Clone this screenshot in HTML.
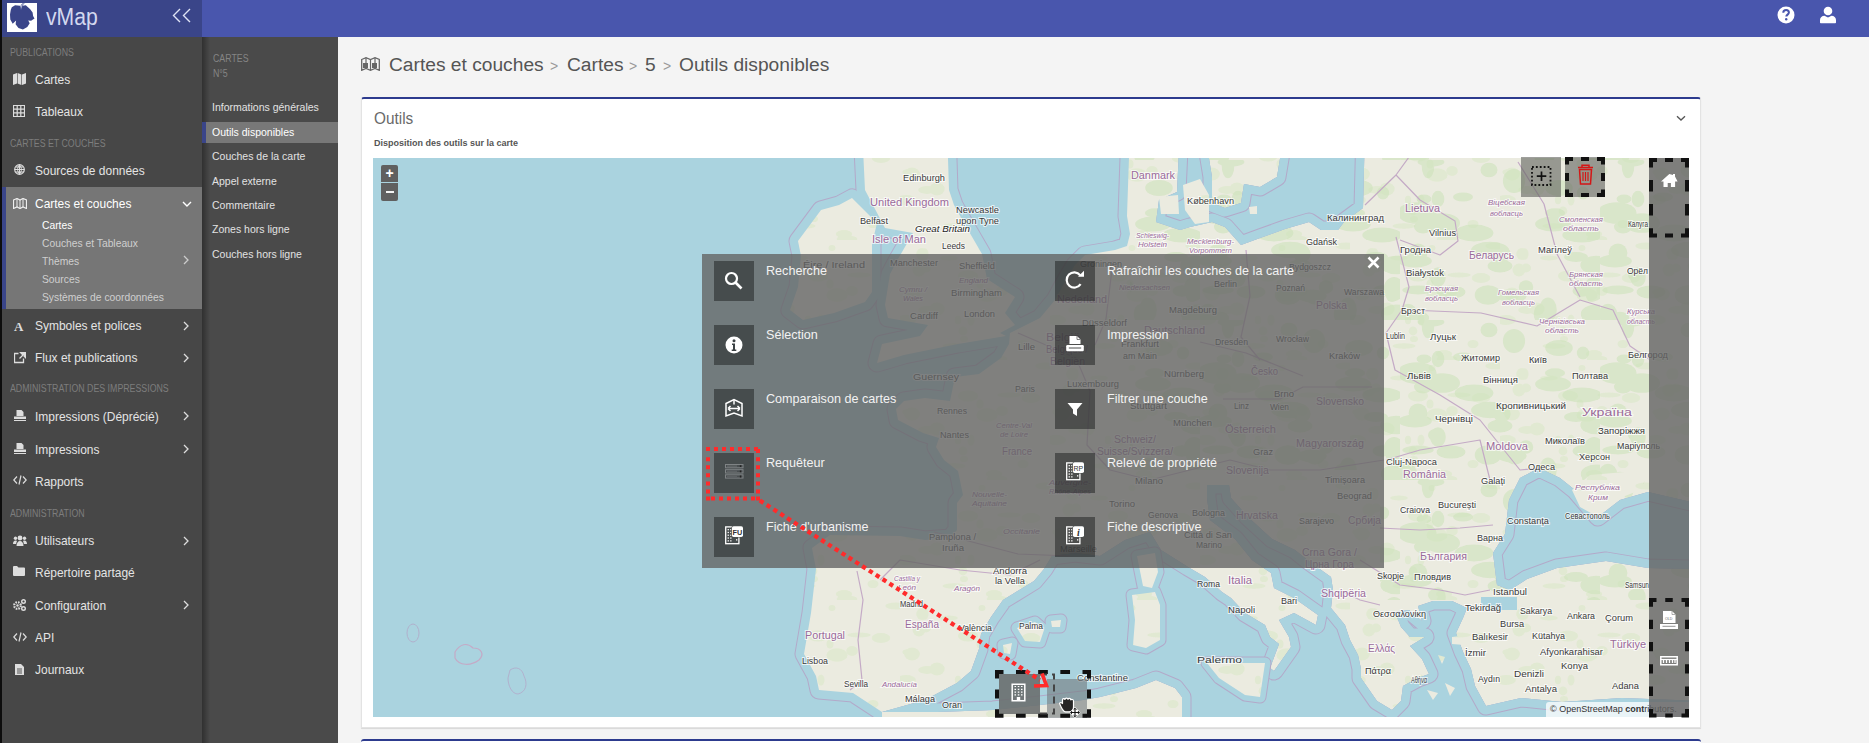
<!DOCTYPE html>
<html><head><meta charset="utf-8">
<style>
*{margin:0;padding:0;box-sizing:border-box}
html,body{width:1869px;height:743px;overflow:hidden;background:#f4f4f4;font-family:"Liberation Sans",sans-serif}
.a{position:absolute;white-space:nowrap}
#topL{left:0;top:0;width:202px;height:37px;background:#3a4589}
#topR{left:202px;top:0;width:1667px;height:37px;background:#4956ad}
#blk{left:0;top:0;width:2px;height:743px;background:#0d0d0d}
#side{left:2px;top:37px;width:200px;height:706px;background:#474747}
#side2{left:202px;top:37px;width:136px;height:706px;background:#4a4a4a}
#sh{left:202px;top:37px;width:8px;height:706px;background:linear-gradient(90deg,rgba(0,0,0,.35),rgba(0,0,0,0))}
.hd{font-size:10px;color:#7d7d7d;left:10px;line-height:12px;transform:scaleX(.88);transform-origin:left}
.mi{font-size:13px;color:#e4e4e4;left:35px;line-height:16px;transform:scaleX(.92);transform-origin:left}
.si{font-size:10.3px;color:#cfcfcf;left:42px;line-height:14px}
.s2{font-size:10.5px;color:#e2e2e2;left:212px;line-height:14px}
.ot{font-size:12.6px;color:#f2f2f2;line-height:16px}
.ib{width:40px;height:40px;background:rgba(30,32,33,.52)}
</style></head><body>
<div class="a" id="topL"></div>
<div class="a" id="topR"></div>
<div class="a" id="side"></div>
<div class="a" id="side2"></div>
<div class="a" id="sh"></div>
<div class="a" style="left:2px;top:187px;width:200px;height:122px;background:#767676"></div>
<div class="a" style="left:2px;top:187px;width:4px;height:122px;background:#3a4589"></div>
<div class="a" style="left:202px;top:122px;width:136px;height:21px;background:#787878"></div>
<div class="a" style="left:202px;top:122px;width:4px;height:21px;background:#3a4589"></div>
<div class="a" id="blk"></div>
<!-- logo -->
<div class="a" style="left:7px;top:3px;width:30px;height:29px;background:#fff"></div>
<svg class="a" style="left:0;top:0" width="40" height="36" viewBox="0 0 40 36"><path d="M11.8 7.3L15.1 5.3 20 5.8 21 9.7 22.4 5.8 25.8 5.3 30.2 9.2 32.6 12.6 33.1 16 34.5 18.4 31.1 20.8 28.2 20.4 29.7 23.3 27.3 27.1 22.9 29.6 18.5 28.1 15.6 24.2 16.1 20.4 12.7 23.8 10.3 19.4 10 14.5 10.8 9.7z" fill="#3a4589"/><path d="M20.3 9.5C20.5 6 21.5 4 23.6 2.9M21.6 9.5C21.8 6.5 22.5 4.5 24.5 2.9" fill="none" stroke="#3a4589" stroke-width=".7"/></svg>
<div class="a" style="left:46px;top:3px;font-size:23px;line-height:28px;color:#d3d8ef;transform:scaleX(.92);transform-origin:left">vMap</div>
<svg class="a" style="left:172px;top:8px" width="20" height="15" viewBox="0 0 20 15"><path d="M8 1L1.5 7.5 8 14M18 1l-6.5 6.5L18 14" fill="none" stroke="#dfe3f5" stroke-width="1.4"/></svg>
<!-- top right icons -->
<svg class="a" style="left:1776.5px;top:5.8px" width="18" height="18" viewBox="0 0 18 18"><circle cx="9" cy="9" r="8.5" fill="#fff"/><path d="M6.3 6.8c0-1.7 1.2-2.7 2.8-2.7s2.8 1 2.8 2.5c0 2-2.6 2.1-2.6 4" fill="none" stroke="#4956ad" stroke-width="2"/><circle cx="9.2" cy="13.3" r="1.2" fill="#4956ad"/></svg>
<svg class="a" style="left:1819px;top:6px" width="18" height="18" viewBox="0 0 18 18"><circle cx="9" cy="5" r="4.3" fill="#fff"/><path d="M1 16.5v-2.5c0-2.5 2-4.2 4.5-4.2l3.5 1.8 3.5-1.8c2.5 0 4.5 1.7 4.5 4.2v2.5a.8.8 0 0 1-.8.8H1.8a.8.8 0 0 1-.8-.8z" fill="#fff"/></svg>
<div class="a hd" style="top:46.6px">PUBLICATIONS</div>
<div class="a hd" style="top:137.6px">CARTES ET COUCHES</div>
<div class="a hd" style="top:383.3px">ADMINISTRATION DES IMPRESSIONS</div>
<div class="a hd" style="top:507.9px">ADMINISTRATION</div>
<div class="a mi" style="top:71.9px">Cartes</div>
<svg class="a ic" style="left:13px;top:73.4px" width="13" height="12" viewBox="0 0 13 12"><path d="M0 1.5L4 0v10.5L0 12zM4.6 0l3.8 1.5V12L4.6 10.5zM9 1.5L13 0v10.5L9 12z" fill="#ddd"/></svg>
<div class="a mi" style="top:103.8px">Tableaux</div>
<svg class="a ic" style="left:13px;top:105.3px" width="12" height="12" viewBox="0 0 12 12"><path d="M.5 .5h11v11h-11zM.5 4.2h11M.5 7.8h11M4.2 .5v11M7.8 .5v11" fill="none" stroke="#ddd" stroke-width="1.2"/></svg>
<div class="a mi" style="top:162.9px">Sources de données</div>
<svg class="a ic" style="left:14px;top:164.4px" width="11" height="11" viewBox="0 0 11 11"><circle cx="5.5" cy="5.5" r="4.8" fill="none" stroke="#ddd" stroke-width="1.2"/><path d="M.7 5.5h9.6M5.5 .7v9.6M2 3h7M2 8h7M5.5 .7c-2.5 3-2.5 6.6 0 9.6M5.5 .7c2.5 3 2.5 6.6 0 9.6" fill="none" stroke="#ddd" stroke-width="1"/></svg>
<div class="a mi" style="top:196.1px;color:#fff">Cartes et couches</div>
<svg class="a ic" style="left:13px;top:197.6px" width="14" height="11" viewBox="0 0 14 11"><path d="M.5 2L4 .5 7 2l3-1.5L13.5 2v8.5L10 9 7 10.5 4 9 .5 10.5z" fill="none" stroke="#eee" stroke-width="1.2"/><path d="M4 .5V9M7 2v8.5M10 .5V9" stroke="#eee" stroke-width="1"/></svg>
<svg class="a" style="left:182px;top:200.6px" width="10" height="6" viewBox="0 0 10 6"><path d="M1 1l4 4 4-4" fill="none" stroke="#fff" stroke-width="1.4"/></svg>
<div class="a mi" style="top:318.2px">Symboles et polices</div>
<div class="a" style="left:14px;top:319.7px;font:bold 13px 'Liberation Serif',serif;color:#ddd;line-height:13px">A</div>
<svg class="a" style="left:183px;top:320.7px" width="6" height="10" viewBox="0 0 6 10"><path d="M1 1l4 4-4 4" fill="none" stroke="#ddd" stroke-width="1.3"/></svg>
<div class="a mi" style="top:350.1px">Flux et publications</div>
<svg class="a ic" style="left:14px;top:351.6px" width="12" height="12" viewBox="0 0 12 12"><path d="M9.5 6.5v4h-9v-9h4" fill="none" stroke="#ddd" stroke-width="1.3"/><path d="M6.5 0.5h5v5z M10 2L5.5 6.5" fill="#ddd" stroke="#ddd" stroke-width="1.3"/></svg>
<svg class="a" style="left:183px;top:352.6px" width="6" height="10" viewBox="0 0 6 10"><path d="M1 1l4 4-4 4" fill="none" stroke="#ddd" stroke-width="1.3"/></svg>
<div class="a mi" style="top:408.9px">Impressions (Déprécié)</div>
<svg class="a ic" style="left:14px;top:410.4px" width="12" height="11" viewBox="0 0 12 11"><path d="M2.5 0h5l2 2v4h-7z" fill="#ddd"/><path d="M0 6.5h12V9H0zM0 10h12v1H0z" fill="#ddd"/></svg>
<svg class="a" style="left:183px;top:411.4px" width="6" height="10" viewBox="0 0 6 10"><path d="M1 1l4 4-4 4" fill="none" stroke="#ddd" stroke-width="1.3"/></svg>
<div class="a mi" style="top:441.5px">Impressions</div>
<svg class="a ic" style="left:14px;top:443.0px" width="12" height="11" viewBox="0 0 12 11"><path d="M2.5 0h5l2 2v4h-7z" fill="#ddd"/><path d="M0 6.5h12V9H0zM0 10h12v1H0z" fill="#ddd"/></svg>
<svg class="a" style="left:183px;top:444.0px" width="6" height="10" viewBox="0 0 6 10"><path d="M1 1l4 4-4 4" fill="none" stroke="#ddd" stroke-width="1.3"/></svg>
<div class="a mi" style="top:473.8px">Rapports</div>
<svg class="a ic" style="left:13px;top:475.3px" width="14" height="10" viewBox="0 0 14 10"><path d="M4 1.5L.8 5 4 8.5M10 1.5L13.2 5 10 8.5M8 0.5L6 9.5" fill="none" stroke="#ddd" stroke-width="1.2"/></svg>
<div class="a mi" style="top:533.0px">Utilisateurs</div>
<svg class="a ic" style="left:13px;top:534.5px" width="14" height="11" viewBox="0 0 14 11"><circle cx="7" cy="3" r="2.4" fill="#ddd"/><circle cx="2.5" cy="3.3" r="1.7" fill="#ddd"/><circle cx="11.5" cy="3.3" r="1.7" fill="#ddd"/><path d="M3.5 11c0-3 1.5-5 3.5-5s3.5 2 3.5 5zM0 9c0-2 1-3.5 2.5-3.5 1 0 1.5.5 1.5.5-.5 1-.8 2-.8 3zM14 9c0-2-1-3.5-2.5-3.5-1 0-1.5.5-1.5.5.5 1 .8 2 .8 3z" fill="#ddd"/></svg>
<svg class="a" style="left:183px;top:535.5px" width="6" height="10" viewBox="0 0 6 10"><path d="M1 1l4 4-4 4" fill="none" stroke="#ddd" stroke-width="1.3"/></svg>
<div class="a mi" style="top:564.9px">Répertoire partagé</div>
<svg class="a ic" style="left:13px;top:566.4px" width="12" height="10" viewBox="0 0 12 10"><path d="M0 1a1 1 0 0 1 1-1h3l1.5 1.5H11a1 1 0 0 1 1 1V9a1 1 0 0 1-1 1H1a1 1 0 0 1-1-1z" fill="#ddd"/></svg>
<div class="a mi" style="top:597.9px">Configuration</div>
<svg class="a ic" style="left:13px;top:599.4px" width="13" height="12" viewBox="0 0 13 12"><circle cx="4.5" cy="6.5" r="3.3" fill="none" stroke="#ddd" stroke-width="2.2" stroke-dasharray="1.6 1"/><circle cx="4.5" cy="6.5" r="1.2" fill="#ddd"/><circle cx="10.5" cy="2.5" r="1.8" fill="none" stroke="#ddd" stroke-width="1.4"/><circle cx="10.5" cy="9.5" r="1.8" fill="none" stroke="#ddd" stroke-width="1.4"/></svg>
<svg class="a" style="left:183px;top:600.4px" width="6" height="10" viewBox="0 0 6 10"><path d="M1 1l4 4-4 4" fill="none" stroke="#ddd" stroke-width="1.3"/></svg>
<div class="a mi" style="top:630.2px">API</div>
<svg class="a ic" style="left:13px;top:631.7px" width="14" height="10" viewBox="0 0 14 10"><path d="M4 1.5L.8 5 4 8.5M10 1.5L13.2 5 10 8.5M8 0.5L6 9.5" fill="none" stroke="#ddd" stroke-width="1.2"/></svg>
<div class="a mi" style="top:662.0px">Journaux</div>
<svg class="a ic" style="left:15px;top:663.5px" width="9" height="11" viewBox="0 0 9 11"><path d="M0 0h6l3 3v8H0z" fill="#ddd"/><path d="M2 5h5M2 7h5M2 9h5" stroke="#474747" stroke-width=".9"/></svg>
<div class="a si" style="top:218.5px;color:#fff">Cartes</div>
<div class="a si" style="top:236.5px;">Couches et Tableaux</div>
<div class="a si" style="top:254.5px;">Thèmes</div>
<div class="a si" style="top:272.5px;">Sources</div>
<div class="a si" style="top:290.5px;">Systèmes de coordonnées</div>
<svg class="a" style="left:183px;top:254.5px" width="6" height="10" viewBox="0 0 6 10"><path d="M1 1l4 4-4 4" fill="none" stroke="#ccc" stroke-width="1.3"/></svg><div class="a hd" style="left:213px;top:53px;color:#858585">CARTES</div>
<div class="a hd" style="left:213px;top:68px;color:#858585">N°5</div>
<div class="a s2" style="top:100px">Informations générales</div>
<div class="a s2" style="top:125px;color:#fff">Outils disponibles</div>
<div class="a s2" style="top:149px">Couches de la carte</div>
<div class="a s2" style="top:174px">Appel externe</div>
<div class="a s2" style="top:198px">Commentaire</div>
<div class="a s2" style="top:222px">Zones hors ligne</div>
<div class="a s2" style="top:247px">Couches hors ligne</div>
<!-- breadcrumb -->
<svg class="a" style="left:361px;top:57px" width="19" height="14" viewBox="0 0 19 14"><path d="M.7 2.5L5 .7l4.5 1.8L14 .7l4.3 1.8v10.8L14 11.5l-4.5 1.8L5 11.5.7 13.3z" fill="none" stroke="#666" stroke-width="1.3"/><path d="M5 .7v10.8M9.5 2.5v10.8M14 .7v10.8" stroke="#666" stroke-width="1.2"/><rect x="2" y="6" width="5" height="5" fill="#666"/><rect x="11" y="6" width="5" height="5" fill="#666"/></svg>
<div class="a" style="left:389px;top:54px;font-size:19.2px;line-height:22px;color:#555">Cartes et couches</div>
<div class="a" style="left:550px;top:56px;font-size:14px;line-height:20px;color:#9a9a9a">&gt;</div>
<div class="a" style="left:567px;top:54px;font-size:19.2px;line-height:22px;color:#555">Cartes</div>
<div class="a" style="left:629px;top:56px;font-size:14px;line-height:20px;color:#9a9a9a">&gt;</div>
<div class="a" style="left:645px;top:54px;font-size:19.2px;line-height:22px;color:#555">5</div>
<div class="a" style="left:663px;top:56px;font-size:14px;line-height:20px;color:#9a9a9a">&gt;</div>
<div class="a" style="left:679px;top:54px;font-size:19.2px;line-height:22px;color:#555">Outils disponibles</div>
<!-- panel -->
<div class="a" style="left:361px;top:97px;width:1340px;height:631px;background:#fff;border:1px solid #e3e3e3;border-top:2px solid #2d3b8e;border-radius:3px 3px 0 0;box-shadow:0 1px 1px rgba(0,0,0,.12)"></div>
<div class="a" style="left:374px;top:107.5px;font-size:16.5px;line-height:20px;color:#6a6a6a;transform:scaleX(.93);transform-origin:left">Outils</div>
<svg class="a" style="left:1675.5px;top:114.5px" width="10" height="7" viewBox="0 0 10 7"><path d="M1 1.2l4 3.8 4-3.8" fill="none" stroke="#555" stroke-width="1.3"/></svg>
<div class="a" style="left:374px;top:137px;font-size:9px;font-weight:bold;line-height:12px;color:#555">Disposition des outils sur la carte</div>
<div class="a" style="left:361px;top:739px;width:1340px;height:10px;background:#fff;border-top:2px solid #2d3b8e;border-radius:3px 3px 0 0"></div>
<svg class="a" style="left:373px;top:158px" width="1316" height="559" viewBox="373 158 1316 559">
<defs><pattern id="lp" width="150" height="120" patternUnits="userSpaceOnUse"><rect width="150" height="120" fill="#ebebe0"/><g fill="#d9e8c6" opacity=".55"><ellipse cx="49" cy="18" rx="8.9" ry="2.4"/><ellipse cx="80" cy="44" rx="3.5" ry="4.5"/><ellipse cx="6" cy="52" rx="3.6" ry="2.5"/><ellipse cx="64" cy="99" rx="4.1" ry="3.1"/><ellipse cx="94" cy="114" rx="8.2" ry="4.0"/><ellipse cx="146" cy="6" rx="10.7" ry="3.4"/><ellipse cx="22" cy="14" rx="5.8" ry="6.1"/><ellipse cx="27" cy="70" rx="8.8" ry="3.9"/><ellipse cx="82" cy="8" rx="3.5" ry="3.0"/><ellipse cx="102" cy="51" rx="5.8" ry="4.9"/><ellipse cx="68" cy="36" rx="10.1" ry="5.5"/><ellipse cx="37" cy="69" rx="7.7" ry="6.4"/><ellipse cx="109" cy="35" rx="11.8" ry="2.6"/><ellipse cx="63" cy="91" rx="4.4" ry="4.4"/><ellipse cx="6" cy="80" rx="9.9" ry="4.9"/><ellipse cx="131" cy="38" rx="9.3" ry="5.0"/><ellipse cx="87" cy="55" rx="10.6" ry="6.7"/><ellipse cx="71" cy="80" rx="3.5" ry="5.5"/><ellipse cx="97" cy="119" rx="10.4" ry="3.4"/><ellipse cx="58" cy="80" rx="3.2" ry="4.3"/><ellipse cx="25" cy="14" rx="3.5" ry="5.8"/><ellipse cx="19" cy="30" rx="6.5" ry="6.4"/><ellipse cx="12" cy="54" rx="7.9" ry="6.4"/><ellipse cx="123" cy="104" rx="5.5" ry="4.1"/><ellipse cx="54" cy="106" rx="11.6" ry="2.8"/><ellipse cx="26" cy="28" rx="5.1" ry="4.4"/></g></pattern><clipPath id="c0"><path d="M1180 128L1177 192 1159 200 1156 222 1180 230 1190 227 1212 222 1225 227 1241 245 1260 238 1285 229 1309 222 1321 230 1338 230 1344 222 1363 208 1365 128 1285 128 1277 177 1260 187 1244 184 1241 203 1225 208 1212 203 1212 177 1204 128z"/></clipPath><clipPath id="c1"><path d="M882 712L925 700 957 683 971 671 979 649 981 634 991 617 1003 600 1034 581 1044 569 1052 556 1075 553 1100 556 1125 540 1150 532 1161 550 1188 567 1205 577 1222 592 1231 598 1245 613 1265 625 1270 637 1279 644 1270 668 1274 671 1291 647 1289 637 1279 620 1294 613 1316 625 1318 615 1294 598 1274 588 1271 573 1252 560 1235 539 1210 520 1207 498 1207 485 1229 485 1231 498 1248 517 1272 539 1295 550 1310 562 1331 577 1333 590 1331 608 1345 625 1350 640 1358 655 1361 669 1361 678 1377 701 1392 710 1401 701 1403 686 1418 678 1429 674 1422 659 1410 646 1425 637 1410 637 1401 627 1395 612 1409 610 1422 621 1418 606 1433 601 1452 601 1467 608 1463 618 1456 633 1463 652 1471 669 1475 686 1486 706 1521 698 1562 702 1622 698 1725 702 1725 750 1182 750 1182 697 1175 688 1156 680 1136 688 1100 697 1083 700 1040 705 993 710 937 712z"/></clipPath><clipPath id="c2"><path d="M1539 468L1520 478 1509 500 1505 534 1493 553 1497 585 1510 590 1527 579 1557 568 1606 561 1648 568 1725 570 1725 510 1648 492 1620 500 1598 517 1575 490 1560 478z"/></clipPath></defs>
<rect x="373" y="158" width="1316" height="559" fill="#aad3df"/>
<g fill="none" stroke-linejoin="round">
<path d="M1130 128L1725 128 1725 750 882 750 882 712 853 693 819 690 816 676 804 654 811 613 816 569 812 548 830 535 900 536 925 540 950 538 957 530 957 503 963 495 958 471 944 460 936 447 939 438 923 433 898 420 896 409 904 401 925 398 950 401 955 377 979 374 1001 358 1009 344 1010 333 1040 318 1055 300 1066 280 1075 265 1085 255 1115 250 1127 246 1130 234 1127 216z" stroke="#b3a9c9" stroke-width="19"/>
<path d="M862 128L947 128 949 190 954 205 964 223 982 254 987 279 1015 297 1005 313 1015 325 1000 333 1006 336 958 344 904 355 877 363 882 344 920 336 928 325 888 318 885 305 890 274 898 259 913 233 885 228 865 190z" stroke="#b3a9c9" stroke-width="19"/>
<path d="M852 198L859 205 877 223 872 244 872 292 865 302 834 313 803 320 790 310 798 287 801 256 798 241 821 210 839 205z" stroke="#b3a9c9" stroke-width="19"/>
<path d="M1130 128L1725 128 1725 750 882 750 882 712 853 693 819 690 816 676 804 654 811 613 816 569 812 548 830 535 900 536 925 540 950 538 957 530 957 503 963 495 958 471 944 460 936 447 939 438 923 433 898 420 896 409 904 401 925 398 950 401 955 377 979 374 1001 358 1009 344 1010 333 1040 318 1055 300 1066 280 1075 265 1085 255 1115 250 1127 246 1130 234 1127 216z" stroke="#aad3df" stroke-width="17"/>
<path d="M862 128L947 128 949 190 954 205 964 223 982 254 987 279 1015 297 1005 313 1015 325 1000 333 1006 336 958 344 904 355 877 363 882 344 920 336 928 325 888 318 885 305 890 274 898 259 913 233 885 228 865 190z" stroke="#aad3df" stroke-width="17"/>
<path d="M852 198L859 205 877 223 872 244 872 292 865 302 834 313 803 320 790 310 798 287 801 256 798 241 821 210 839 205z" stroke="#aad3df" stroke-width="17"/>
</g>
<g fill="url(#lp)"><path d="M1130 128L1725 128 1725 750 882 750 882 712 853 693 819 690 816 676 804 654 811 613 816 569 812 548 830 535 900 536 925 540 950 538 957 530 957 503 963 495 958 471 944 460 936 447 939 438 923 433 898 420 896 409 904 401 925 398 950 401 955 377 979 374 1001 358 1009 344 1010 333 1040 318 1055 300 1066 280 1075 265 1085 255 1115 250 1127 246 1130 234 1127 216z"/><path d="M862 128L947 128 949 190 954 205 964 223 982 254 987 279 1015 297 1005 313 1015 325 1000 333 1006 336 958 344 904 355 877 363 882 344 920 336 928 325 888 318 885 305 890 274 898 259 913 233 885 228 865 190z"/><path d="M852 198L859 205 877 223 872 244 872 292 865 302 834 313 803 320 790 310 798 287 801 256 798 241 821 210 839 205z"/></g>
<defs><pattern id="gp" width="200" height="160" patternUnits="userSpaceOnUse"><g fill="#cde2ba" opacity=".6"><ellipse cx="90" cy="90" rx="18.9" ry="8.2"/><ellipse cx="102" cy="94" rx="8.6" ry="8.6"/><ellipse cx="126" cy="127" rx="7.3" ry="6.7"/><ellipse cx="18" cy="130" rx="15.7" ry="4.4"/><ellipse cx="196" cy="154" rx="15.2" ry="9.5"/><ellipse cx="31" cy="2" rx="13.4" ry="4.5"/><ellipse cx="38" cy="39" rx="6.4" ry="8.2"/><ellipse cx="88" cy="135" rx="13.3" ry="9.8"/><ellipse cx="100" cy="106" rx="12.4" ry="6.5"/><ellipse cx="200" cy="159" rx="17.8" ry="10.4"/><ellipse cx="63" cy="37" rx="10.0" ry="4.6"/><ellipse cx="153" cy="64" rx="17.9" ry="7.5"/><ellipse cx="192" cy="136" rx="6.0" ry="5.9"/><ellipse cx="182" cy="75" rx="19.7" ry="7.6"/><ellipse cx="15" cy="101" rx="16.9" ry="6.4"/><ellipse cx="17" cy="53" rx="19.5" ry="10.8"/><ellipse cx="24" cy="39" rx="7.4" ry="4.5"/><ellipse cx="159" cy="28" rx="13.8" ry="8.0"/><ellipse cx="38" cy="117" rx="7.8" ry="9.8"/><ellipse cx="23" cy="67" rx="9.0" ry="6.4"/><ellipse cx="194" cy="129" rx="10.3" ry="12.0"/><ellipse cx="42" cy="63" rx="18.0" ry="9.8"/><ellipse cx="20" cy="158" rx="9.0" ry="6.3"/><ellipse cx="155" cy="53" rx="10.1" ry="4.7"/><ellipse cx="18" cy="93" rx="9.4" ry="9.4"/><ellipse cx="74" cy="73" rx="19.4" ry="8.4"/><ellipse cx="115" cy="139" rx="8.6" ry="5.4"/><ellipse cx="182" cy="131" rx="9.5" ry="5.7"/><ellipse cx="148" cy="150" rx="8.8" ry="12.6"/><ellipse cx="176" cy="97" rx="11.9" ry="4.9"/><ellipse cx="8" cy="154" rx="9.3" ry="10.3"/><ellipse cx="51" cy="132" rx="14.4" ry="6.6"/><ellipse cx="35" cy="115" rx="7.0" ry="6.1"/><ellipse cx="112" cy="136" rx="14.6" ry="6.5"/><ellipse cx="183" cy="33" rx="6.2" ry="6.4"/><ellipse cx="89" cy="10" rx="8.5" ry="7.3"/><ellipse cx="114" cy="21" rx="11.1" ry="12.0"/><ellipse cx="196" cy="105" rx="15.7" ry="9.3"/><ellipse cx="28" cy="6" rx="6.3" ry="12.2"/><ellipse cx="140" cy="154" rx="6.3" ry="9.7"/></g></pattern></defs>
<path d="M1130 128H1725V600H1380V470H1130z" fill="url(#gp)"/>
<path d="M1180 128L1177 192 1159 200 1156 222 1180 230 1190 227 1212 222 1225 227 1241 245 1260 238 1285 229 1309 222 1321 230 1338 230 1344 222 1363 208 1365 128 1285 128 1277 177 1260 187 1244 184 1241 203 1225 208 1212 203 1212 177 1204 128z" fill="#aad3df"/>
<g clip-path="url(#c0)" fill="none" stroke-linejoin="round"><path d="M1180 128L1177 192 1159 200 1156 222 1180 230 1190 227 1212 222 1225 227 1241 245 1260 238 1285 229 1309 222 1321 230 1338 230 1344 222 1363 208 1365 128 1285 128 1277 177 1260 187 1244 184 1241 203 1225 208 1212 203 1212 177 1204 128z" stroke="#b3a9c9" stroke-width="19"/><path d="M1180 128L1177 192 1159 200 1156 222 1180 230 1190 227 1212 222 1225 227 1241 245 1260 238 1285 229 1309 222 1321 230 1338 230 1344 222 1363 208 1365 128 1285 128 1277 177 1260 187 1244 184 1241 203 1225 208 1212 203 1212 177 1204 128z" stroke="#aad3df" stroke-width="17"/></g>
<path d="M882 712L925 700 957 683 971 671 979 649 981 634 991 617 1003 600 1034 581 1044 569 1052 556 1075 553 1100 556 1125 540 1150 532 1161 550 1188 567 1205 577 1222 592 1231 598 1245 613 1265 625 1270 637 1279 644 1270 668 1274 671 1291 647 1289 637 1279 620 1294 613 1316 625 1318 615 1294 598 1274 588 1271 573 1252 560 1235 539 1210 520 1207 498 1207 485 1229 485 1231 498 1248 517 1272 539 1295 550 1310 562 1331 577 1333 590 1331 608 1345 625 1350 640 1358 655 1361 669 1361 678 1377 701 1392 710 1401 701 1403 686 1418 678 1429 674 1422 659 1410 646 1425 637 1410 637 1401 627 1395 612 1409 610 1422 621 1418 606 1433 601 1452 601 1467 608 1463 618 1456 633 1463 652 1471 669 1475 686 1486 706 1521 698 1562 702 1622 698 1725 702 1725 750 1182 750 1182 697 1175 688 1156 680 1136 688 1100 697 1083 700 1040 705 993 710 937 712z" fill="#aad3df"/>
<g clip-path="url(#c1)" fill="none" stroke-linejoin="round"><path d="M882 712L925 700 957 683 971 671 979 649 981 634 991 617 1003 600 1034 581 1044 569 1052 556 1075 553 1100 556 1125 540 1150 532 1161 550 1188 567 1205 577 1222 592 1231 598 1245 613 1265 625 1270 637 1279 644 1270 668 1274 671 1291 647 1289 637 1279 620 1294 613 1316 625 1318 615 1294 598 1274 588 1271 573 1252 560 1235 539 1210 520 1207 498 1207 485 1229 485 1231 498 1248 517 1272 539 1295 550 1310 562 1331 577 1333 590 1331 608 1345 625 1350 640 1358 655 1361 669 1361 678 1377 701 1392 710 1401 701 1403 686 1418 678 1429 674 1422 659 1410 646 1425 637 1410 637 1401 627 1395 612 1409 610 1422 621 1418 606 1433 601 1452 601 1467 608 1463 618 1456 633 1463 652 1471 669 1475 686 1486 706 1521 698 1562 702 1622 698 1725 702 1725 750 1182 750 1182 697 1175 688 1156 680 1136 688 1100 697 1083 700 1040 705 993 710 937 712z" stroke="#b3a9c9" stroke-width="19"/><path d="M882 712L925 700 957 683 971 671 979 649 981 634 991 617 1003 600 1034 581 1044 569 1052 556 1075 553 1100 556 1125 540 1150 532 1161 550 1188 567 1205 577 1222 592 1231 598 1245 613 1265 625 1270 637 1279 644 1270 668 1274 671 1291 647 1289 637 1279 620 1294 613 1316 625 1318 615 1294 598 1274 588 1271 573 1252 560 1235 539 1210 520 1207 498 1207 485 1229 485 1231 498 1248 517 1272 539 1295 550 1310 562 1331 577 1333 590 1331 608 1345 625 1350 640 1358 655 1361 669 1361 678 1377 701 1392 710 1401 701 1403 686 1418 678 1429 674 1422 659 1410 646 1425 637 1410 637 1401 627 1395 612 1409 610 1422 621 1418 606 1433 601 1452 601 1467 608 1463 618 1456 633 1463 652 1471 669 1475 686 1486 706 1521 698 1562 702 1622 698 1725 702 1725 750 1182 750 1182 697 1175 688 1156 680 1136 688 1100 697 1083 700 1040 705 993 710 937 712z" stroke="#aad3df" stroke-width="17"/></g>
<path d="M1539 468L1520 478 1509 500 1505 534 1493 553 1497 585 1510 590 1527 579 1557 568 1606 561 1648 568 1725 570 1725 510 1648 492 1620 500 1598 517 1575 490 1560 478z" fill="#aad3df"/>
<g clip-path="url(#c2)" fill="none" stroke-linejoin="round"><path d="M1539 468L1520 478 1509 500 1505 534 1493 553 1497 585 1510 590 1527 579 1557 568 1606 561 1648 568 1725 570 1725 510 1648 492 1620 500 1598 517 1575 490 1560 478z" stroke="#b3a9c9" stroke-width="19"/><path d="M1539 468L1520 478 1509 500 1505 534 1493 553 1497 585 1510 590 1527 579 1557 568 1606 561 1648 568 1725 570 1725 510 1648 492 1620 500 1598 517 1575 490 1560 478z" stroke="#aad3df" stroke-width="17"/></g>
<path d="M1481 597L1517 597 1517 610 1481 610z" fill="#aad3df"/>
<g fill="none" stroke-linejoin="round"><path d="M1137 556L1155 553 1158 572 1152 588 1143 586z" stroke="#b3a9c9" stroke-width="13"/><path d="M1132 595L1155 592 1160 605 1160 640 1146 648 1133 645 1135 620z" stroke="#b3a9c9" stroke-width="13"/><path d="M1207 663L1265 663 1260 697 1245 695 1219 678z" stroke="#b3a9c9" stroke-width="13"/><path d="M1017 628L1035 622 1044 630 1040 642 1025 641z" stroke="#b3a9c9" stroke-width="13"/><path d="M1051 621L1061 620 1060 627 1052 627z" stroke="#b3a9c9" stroke-width="13"/><path d="M1003 645L1012 643 1010 654 1004 653z" stroke="#b3a9c9" stroke-width="13"/><path d="M1137 556L1155 553 1158 572 1152 588 1143 586z" stroke="#aad3df" stroke-width="11"/><path d="M1132 595L1155 592 1160 605 1160 640 1146 648 1133 645 1135 620z" stroke="#aad3df" stroke-width="11"/><path d="M1207 663L1265 663 1260 697 1245 695 1219 678z" stroke="#aad3df" stroke-width="11"/><path d="M1017 628L1035 622 1044 630 1040 642 1025 641z" stroke="#aad3df" stroke-width="11"/><path d="M1051 621L1061 620 1060 627 1052 627z" stroke="#aad3df" stroke-width="11"/><path d="M1003 645L1012 643 1010 654 1004 653z" stroke="#aad3df" stroke-width="11"/></g>
<g fill="url(#lp)"><path d="M1183 185L1200 179 1209 195 1209 222 1195 224 1185 210z"/><path d="M1159 197L1178 195 1179 214 1161 214z"/><path d="M1249 207L1257 206 1257 214 1250 214z"/><path d="M1572 490L1590 475 1625 472 1646 478 1640 490 1615 500 1598 517 1580 507z"/><path d="M1137 556L1155 553 1158 572 1152 588 1143 586z"/><path d="M1132 595L1155 592 1160 605 1160 640 1146 648 1133 645 1135 620z"/><path d="M1207 663L1265 663 1260 697 1245 695 1219 678z"/><path d="M1017 628L1035 622 1044 630 1040 642 1025 641z"/><path d="M1051 621L1061 620 1060 627 1052 627z"/><path d="M1003 645L1012 643 1010 654 1004 653z"/><path d="M1452 637L1467 635 1465 645 1452 644z"/><path d="M1438 655L1445 657 1442 664z"/><path d="M1427 690L1438 693 1433 700z"/><path d="M1445 683L1455 688 1450 696z"/></g>
<g fill="none" stroke="#c4aac6" stroke-width="1.2" stroke-linejoin="round"><path d="M1396 175L1420 200 1455 221 1458 241 1440 255 1400 240"/><path d="M1396 237L1409 287 1402 310 1386 333 1395 370 1440 395 1480 420 1500 445"/><path d="M1409 310L1481 313 1537 326 1580 300 1613 310 1630 346 1649 359"/><path d="M1518 162L1544 204 1557 254 1580 297"/><path d="M1365 205L1396 175 1430 128"/><path d="M1500 445L1520 470 1541 468"/><path d="M1386 460L1420 450 1480 440 1490 480"/><path d="M1380 528L1420 530 1460 528 1493 525"/><path d="M1360 560L1400 585 1440 590 1465 595 1490 590"/><path d="M1340 590L1360 600 1380 605"/><path d="M857 571L863 600 858 640 862 680 850 690"/><path d="M880 580L900 560 960 570 1010 575 1040 560"/><path d="M455 652c5-8 12-10 18-4 8 0 12 6 6 12-8 6-20 6-24-2z"/><path d="M1246 250L1250 296 1241 337 1260 360"/><path d="M1113 261L1106 319 1095 345"/><path d="M1200 342L1246 353 1303 376"/><path d="M1223 399L1280 399 1303 387 1372 387"/><path d="M1018 333L1076 358 1090 391 1087 445 1110 470 1150 480 1190 470 1230 460 1270 470 1320 470 1384 460"/><path d="M934 532L1018 554 1070 556"/></g>
<g fill="none" stroke="#b3a9c9" stroke-width="1" opacity=".8"><ellipse cx="413" cy="633" rx="6" ry="9"/><path d="M510 670c6-4 12-2 14 6 4 8 2 16-6 18-6 0-10-8-10-16z"/></g>
</svg><svg class="a" style="left:373px;top:158px" width="1316" height="559" viewBox="373 158 1316 559" font-family="Liberation Sans">
<text x="903" y="181.2" font-size="9" textLength="42" lengthAdjust="spacingAndGlyphs" fill="#3a3a3a" stroke="#fff" stroke-width="2" stroke-opacity=".7" paint-order="stroke">Edinburgh</text>
<text x="870" y="206.2" font-size="10" textLength="79" lengthAdjust="spacingAndGlyphs" fill="#9a6a9a" stroke="#fff" stroke-width="2" stroke-opacity=".7" paint-order="stroke">United Kingdom</text>
<text x="956" y="213.2" font-size="9" textLength="43" lengthAdjust="spacingAndGlyphs" fill="#3a3a3a" stroke="#fff" stroke-width="2" stroke-opacity=".7" paint-order="stroke">Newcastle</text>
<text x="956" y="224.2" font-size="9" textLength="43" lengthAdjust="spacingAndGlyphs" fill="#3a3a3a" stroke="#fff" stroke-width="2" stroke-opacity=".7" paint-order="stroke">upon Tyne</text>
<text x="860" y="224.2" font-size="9" textLength="28" lengthAdjust="spacingAndGlyphs" fill="#3a3a3a" stroke="#fff" stroke-width="2" stroke-opacity=".7" paint-order="stroke">Belfast</text>
<text x="915" y="232.2" font-size="9" textLength="55" lengthAdjust="spacingAndGlyphs" fill="#222" stroke="#fff" stroke-width="2" stroke-opacity=".7" paint-order="stroke" font-style="italic">Great Britain</text>
<text x="872" y="243.2" font-size="10" textLength="54" lengthAdjust="spacingAndGlyphs" fill="#9a6a9a" stroke="#fff" stroke-width="2" stroke-opacity=".7" paint-order="stroke">Isle of Man</text>
<text x="942" y="249.2" font-size="9" textLength="23" lengthAdjust="spacingAndGlyphs" fill="#3a3a3a" stroke="#fff" stroke-width="2" stroke-opacity=".7" paint-order="stroke">Leeds</text>
<text x="1131" y="179.2" font-size="10" textLength="44" lengthAdjust="spacingAndGlyphs" fill="#9a6a9a" stroke="#fff" stroke-width="2" stroke-opacity=".7" paint-order="stroke">Danmark</text>
<text x="1187" y="204.2" font-size="9" textLength="47" lengthAdjust="spacingAndGlyphs" fill="#3a3a3a" stroke="#fff" stroke-width="2" stroke-opacity=".7" paint-order="stroke">København</text>
<text x="1327" y="221.2" font-size="9" textLength="57" lengthAdjust="spacingAndGlyphs" fill="#3a3a3a" stroke="#fff" stroke-width="2" stroke-opacity=".7" paint-order="stroke">Калининград</text>
<text x="1136" y="238.2" font-size="8" textLength="33" lengthAdjust="spacingAndGlyphs" fill="#9a6a9a" stroke="#fff" stroke-width="2" stroke-opacity=".7" paint-order="stroke" font-style="italic">Schleswig-</text>
<text x="1138" y="247.2" font-size="8" textLength="29" lengthAdjust="spacingAndGlyphs" fill="#9a6a9a" stroke="#fff" stroke-width="2" stroke-opacity=".7" paint-order="stroke" font-style="italic">Holstein</text>
<text x="1187" y="244.2" font-size="8" textLength="47" lengthAdjust="spacingAndGlyphs" fill="#9a6a9a" stroke="#fff" stroke-width="2" stroke-opacity=".7" paint-order="stroke" font-style="italic">Mecklenburg-</text>
<text x="1189" y="253.2" font-size="8" textLength="43" lengthAdjust="spacingAndGlyphs" fill="#9a6a9a" stroke="#fff" stroke-width="2" stroke-opacity=".7" paint-order="stroke" font-style="italic">Vorpommern</text>
<text x="1306" y="245.2" font-size="9" textLength="31" lengthAdjust="spacingAndGlyphs" fill="#3a3a3a" stroke="#fff" stroke-width="2" stroke-opacity=".7" paint-order="stroke">Gdańsk</text>
<text x="1405" y="212.2" font-size="10" textLength="35" lengthAdjust="spacingAndGlyphs" fill="#9a6a9a" stroke="#fff" stroke-width="2" stroke-opacity=".7" paint-order="stroke">Lietuva</text>
<text x="1429" y="236.2" font-size="9" textLength="27" lengthAdjust="spacingAndGlyphs" fill="#3a3a3a" stroke="#fff" stroke-width="2" stroke-opacity=".7" paint-order="stroke">Vilnius</text>
<text x="1400" y="253.2" font-size="9" textLength="31" lengthAdjust="spacingAndGlyphs" fill="#3a3a3a" stroke="#fff" stroke-width="2" stroke-opacity=".7" paint-order="stroke">Гродна</text>
<text x="1469" y="259.2" font-size="10" textLength="45" lengthAdjust="spacingAndGlyphs" fill="#9a6a9a" stroke="#fff" stroke-width="2" stroke-opacity=".7" paint-order="stroke">Беларусь</text>
<text x="1538" y="253.2" font-size="9" textLength="34" lengthAdjust="spacingAndGlyphs" fill="#3a3a3a" stroke="#fff" stroke-width="2" stroke-opacity=".7" paint-order="stroke">Магілеў</text>
<text x="1406" y="276.2" font-size="9" textLength="38" lengthAdjust="spacingAndGlyphs" fill="#3a3a3a" stroke="#fff" stroke-width="2" stroke-opacity=".7" paint-order="stroke">Białystok</text>
<text x="1401" y="314.2" font-size="9" textLength="24" lengthAdjust="spacingAndGlyphs" fill="#3a3a3a" stroke="#fff" stroke-width="2" stroke-opacity=".7" paint-order="stroke">Брэст</text>
<text x="1386" y="339.2" font-size="9" textLength="19" lengthAdjust="spacingAndGlyphs" fill="#3a3a3a" stroke="#fff" stroke-width="2" stroke-opacity=".7" paint-order="stroke">Lublin</text>
<text x="1430" y="340.2" font-size="9" textLength="26" lengthAdjust="spacingAndGlyphs" fill="#3a3a3a" stroke="#fff" stroke-width="2" stroke-opacity=".7" paint-order="stroke">Луцьк</text>
<text x="1461" y="361.2" font-size="9" textLength="39" lengthAdjust="spacingAndGlyphs" fill="#3a3a3a" stroke="#fff" stroke-width="2" stroke-opacity=".7" paint-order="stroke">Житомир</text>
<text x="1529" y="363.2" font-size="9" textLength="18" lengthAdjust="spacingAndGlyphs" fill="#3a3a3a" stroke="#fff" stroke-width="2" stroke-opacity=".7" paint-order="stroke">Київ</text>
<text x="1407" y="379.2" font-size="9" textLength="24" lengthAdjust="spacingAndGlyphs" fill="#3a3a3a" stroke="#fff" stroke-width="2" stroke-opacity=".7" paint-order="stroke">Львів</text>
<text x="1483" y="383.2" font-size="9" textLength="35" lengthAdjust="spacingAndGlyphs" fill="#3a3a3a" stroke="#fff" stroke-width="2" stroke-opacity=".7" paint-order="stroke">Вінниця</text>
<text x="1572" y="379.2" font-size="9" textLength="36" lengthAdjust="spacingAndGlyphs" fill="#3a3a3a" stroke="#fff" stroke-width="2" stroke-opacity=".7" paint-order="stroke">Полтава</text>
<text x="1496" y="409.2" font-size="9" textLength="70" lengthAdjust="spacingAndGlyphs" fill="#3a3a3a" stroke="#fff" stroke-width="2" stroke-opacity=".7" paint-order="stroke">Кропивницький</text>
<text x="1582" y="416.2" font-size="10" textLength="50" lengthAdjust="spacingAndGlyphs" fill="#9a6a9a" stroke="#fff" stroke-width="2" stroke-opacity=".7" paint-order="stroke">Україна</text>
<text x="1435" y="422.2" font-size="9" textLength="38" lengthAdjust="spacingAndGlyphs" fill="#3a3a3a" stroke="#fff" stroke-width="2" stroke-opacity=".7" paint-order="stroke">Чернівці</text>
<text x="1598" y="434.2" font-size="9" textLength="47" lengthAdjust="spacingAndGlyphs" fill="#3a3a3a" stroke="#fff" stroke-width="2" stroke-opacity=".7" paint-order="stroke">Запоріжжя</text>
<text x="1545" y="444.2" font-size="9" textLength="40" lengthAdjust="spacingAndGlyphs" fill="#3a3a3a" stroke="#fff" stroke-width="2" stroke-opacity=".7" paint-order="stroke">Миколаїв</text>
<text x="1486" y="450.2" font-size="10" textLength="42" lengthAdjust="spacingAndGlyphs" fill="#9a6a9a" stroke="#fff" stroke-width="2" stroke-opacity=".7" paint-order="stroke">Moldova</text>
<text x="1627" y="274.2" font-size="9" textLength="21" lengthAdjust="spacingAndGlyphs" fill="#3a3a3a" stroke="#fff" stroke-width="2" stroke-opacity=".7" paint-order="stroke">Орёл</text>
<text x="1628" y="227.2" font-size="9" textLength="20" lengthAdjust="spacingAndGlyphs" fill="#3a3a3a" stroke="#fff" stroke-width="2" stroke-opacity=".7" paint-order="stroke">Калуга</text>
<text x="1628" y="358.2" font-size="9" textLength="40" lengthAdjust="spacingAndGlyphs" fill="#3a3a3a" stroke="#fff" stroke-width="2" stroke-opacity=".7" paint-order="stroke">Белгород</text>
<text x="1488" y="205.2" font-size="8" textLength="37" lengthAdjust="spacingAndGlyphs" fill="#9a6a9a" stroke="#fff" stroke-width="2" stroke-opacity=".7" paint-order="stroke" font-style="italic">Віцебская</text>
<text x="1490" y="216.2" font-size="8" textLength="33" lengthAdjust="spacingAndGlyphs" fill="#9a6a9a" stroke="#fff" stroke-width="2" stroke-opacity=".7" paint-order="stroke" font-style="italic">вобласць</text>
<text x="1559" y="222.2" font-size="8" textLength="44" lengthAdjust="spacingAndGlyphs" fill="#9a6a9a" stroke="#fff" stroke-width="2" stroke-opacity=".7" paint-order="stroke" font-style="italic">Смоленская</text>
<text x="1563" y="231.2" font-size="8" textLength="36" lengthAdjust="spacingAndGlyphs" fill="#9a6a9a" stroke="#fff" stroke-width="2" stroke-opacity=".7" paint-order="stroke" font-style="italic">область</text>
<text x="1569" y="277.2" font-size="8" textLength="34" lengthAdjust="spacingAndGlyphs" fill="#9a6a9a" stroke="#fff" stroke-width="2" stroke-opacity=".7" paint-order="stroke" font-style="italic">Брянская</text>
<text x="1569" y="286.2" font-size="8" textLength="34" lengthAdjust="spacingAndGlyphs" fill="#9a6a9a" stroke="#fff" stroke-width="2" stroke-opacity=".7" paint-order="stroke" font-style="italic">область</text>
<text x="1425" y="291.2" font-size="8" textLength="33" lengthAdjust="spacingAndGlyphs" fill="#9a6a9a" stroke="#fff" stroke-width="2" stroke-opacity=".7" paint-order="stroke" font-style="italic">Брэсцкая</text>
<text x="1425" y="301.2" font-size="8" textLength="33" lengthAdjust="spacingAndGlyphs" fill="#9a6a9a" stroke="#fff" stroke-width="2" stroke-opacity=".7" paint-order="stroke" font-style="italic">вобласць</text>
<text x="1498" y="295.2" font-size="8" textLength="41" lengthAdjust="spacingAndGlyphs" fill="#9a6a9a" stroke="#fff" stroke-width="2" stroke-opacity=".7" paint-order="stroke" font-style="italic">Гомельская</text>
<text x="1502" y="305.2" font-size="8" textLength="33" lengthAdjust="spacingAndGlyphs" fill="#9a6a9a" stroke="#fff" stroke-width="2" stroke-opacity=".7" paint-order="stroke" font-style="italic">вобласць</text>
<text x="1539" y="324.2" font-size="8" textLength="46" lengthAdjust="spacingAndGlyphs" fill="#9a6a9a" stroke="#fff" stroke-width="2" stroke-opacity=".7" paint-order="stroke" font-style="italic">Чернігівська</text>
<text x="1545" y="333.2" font-size="8" textLength="34" lengthAdjust="spacingAndGlyphs" fill="#9a6a9a" stroke="#fff" stroke-width="2" stroke-opacity=".7" paint-order="stroke" font-style="italic">область</text>
<text x="1627" y="314.2" font-size="8" textLength="28" lengthAdjust="spacingAndGlyphs" fill="#9a6a9a" stroke="#fff" stroke-width="2" stroke-opacity=".7" paint-order="stroke" font-style="italic">Курська</text>
<text x="1627" y="324.2" font-size="8" textLength="28" lengthAdjust="spacingAndGlyphs" fill="#9a6a9a" stroke="#fff" stroke-width="2" stroke-opacity=".7" paint-order="stroke" font-style="italic">область</text>
<text x="1386" y="465.2" font-size="9" textLength="51" lengthAdjust="spacingAndGlyphs" fill="#3a3a3a" stroke="#fff" stroke-width="2" stroke-opacity=".7" paint-order="stroke">Cluj-Napoca</text>
<text x="1403" y="478.2" font-size="10" textLength="43" lengthAdjust="spacingAndGlyphs" fill="#9a6a9a" stroke="#fff" stroke-width="2" stroke-opacity=".7" paint-order="stroke">România</text>
<text x="1481" y="484.2" font-size="9" textLength="24" lengthAdjust="spacingAndGlyphs" fill="#3a3a3a" stroke="#fff" stroke-width="2" stroke-opacity=".7" paint-order="stroke">Galați</text>
<text x="1528" y="470.2" font-size="9" textLength="27" lengthAdjust="spacingAndGlyphs" fill="#3a3a3a" stroke="#fff" stroke-width="2" stroke-opacity=".7" paint-order="stroke">Одеса</text>
<text x="1579" y="460.2" font-size="9" textLength="31" lengthAdjust="spacingAndGlyphs" fill="#3a3a3a" stroke="#fff" stroke-width="2" stroke-opacity=".7" paint-order="stroke">Херсон</text>
<text x="1617" y="449.2" font-size="9" textLength="43" lengthAdjust="spacingAndGlyphs" fill="#3a3a3a" stroke="#fff" stroke-width="2" stroke-opacity=".7" paint-order="stroke">Маріуполь</text>
<text x="1400" y="513.2" font-size="9" textLength="30" lengthAdjust="spacingAndGlyphs" fill="#3a3a3a" stroke="#fff" stroke-width="2" stroke-opacity=".7" paint-order="stroke">Craiova</text>
<text x="1438" y="508.2" font-size="9" textLength="38" lengthAdjust="spacingAndGlyphs" fill="#3a3a3a" stroke="#fff" stroke-width="2" stroke-opacity=".7" paint-order="stroke">București</text>
<text x="1507" y="524.2" font-size="9" textLength="42" lengthAdjust="spacingAndGlyphs" fill="#3a3a3a" stroke="#fff" stroke-width="2" stroke-opacity=".7" paint-order="stroke">Constanța</text>
<text x="1565" y="519.2" font-size="9" textLength="45" lengthAdjust="spacingAndGlyphs" fill="#3a3a3a" stroke="#fff" stroke-width="2" stroke-opacity=".7" paint-order="stroke">Севастополь</text>
<text x="1575" y="490.2" font-size="8" textLength="45" lengthAdjust="spacingAndGlyphs" fill="#9a6a9a" stroke="#fff" stroke-width="2" stroke-opacity=".7" paint-order="stroke" font-style="italic">Республіка</text>
<text x="1588" y="500.2" font-size="8" textLength="20" lengthAdjust="spacingAndGlyphs" fill="#9a6a9a" stroke="#fff" stroke-width="2" stroke-opacity=".7" paint-order="stroke" font-style="italic">Крим</text>
<text x="1477" y="541.2" font-size="9" textLength="26" lengthAdjust="spacingAndGlyphs" fill="#3a3a3a" stroke="#fff" stroke-width="2" stroke-opacity=".7" paint-order="stroke">Варна</text>
<text x="1420" y="560.2" font-size="10" textLength="47" lengthAdjust="spacingAndGlyphs" fill="#9a6a9a" stroke="#fff" stroke-width="2" stroke-opacity=".7" paint-order="stroke">България</text>
<text x="1377" y="579.2" font-size="9" textLength="27" lengthAdjust="spacingAndGlyphs" fill="#3a3a3a" stroke="#fff" stroke-width="2" stroke-opacity=".7" paint-order="stroke">Skopje</text>
<text x="1414" y="580.2" font-size="9" textLength="37" lengthAdjust="spacingAndGlyphs" fill="#3a3a3a" stroke="#fff" stroke-width="2" stroke-opacity=".7" paint-order="stroke">Пловдив</text>
<text x="1493" y="595.2" font-size="9" textLength="34" lengthAdjust="spacingAndGlyphs" fill="#3a3a3a" stroke="#fff" stroke-width="2" stroke-opacity=".7" paint-order="stroke">Istanbul</text>
<text x="1625" y="588.2" font-size="9" textLength="24" lengthAdjust="spacingAndGlyphs" fill="#3a3a3a" stroke="#fff" stroke-width="2" stroke-opacity=".7" paint-order="stroke">Samsun</text>
<text x="1197" y="587.2" font-size="9" textLength="23" lengthAdjust="spacingAndGlyphs" fill="#3a3a3a" stroke="#fff" stroke-width="2" stroke-opacity=".7" paint-order="stroke">Roma</text>
<text x="1228" y="584.2" font-size="10" textLength="24" lengthAdjust="spacingAndGlyphs" fill="#9a6a9a" stroke="#fff" stroke-width="2" stroke-opacity=".7" paint-order="stroke">Italia</text>
<text x="1321" y="597.2" font-size="10" textLength="45" lengthAdjust="spacingAndGlyphs" fill="#9a6a9a" stroke="#fff" stroke-width="2" stroke-opacity=".7" paint-order="stroke">Shqipëria</text>
<text x="1228" y="613.2" font-size="9" textLength="27" lengthAdjust="spacingAndGlyphs" fill="#3a3a3a" stroke="#fff" stroke-width="2" stroke-opacity=".7" paint-order="stroke">Napoli</text>
<text x="1281" y="604.2" font-size="9" textLength="16" lengthAdjust="spacingAndGlyphs" fill="#3a3a3a" stroke="#fff" stroke-width="2" stroke-opacity=".7" paint-order="stroke">Bari</text>
<text x="1373" y="617.2" font-size="9" textLength="53" lengthAdjust="spacingAndGlyphs" fill="#3a3a3a" stroke="#fff" stroke-width="2" stroke-opacity=".7" paint-order="stroke">Θεσσαλονίκη</text>
<text x="1465" y="611.2" font-size="9" textLength="36" lengthAdjust="spacingAndGlyphs" fill="#3a3a3a" stroke="#fff" stroke-width="2" stroke-opacity=".7" paint-order="stroke">Tekirdağ</text>
<text x="1520" y="614.2" font-size="9" textLength="32" lengthAdjust="spacingAndGlyphs" fill="#3a3a3a" stroke="#fff" stroke-width="2" stroke-opacity=".7" paint-order="stroke">Sakarya</text>
<text x="1567" y="619.2" font-size="9" textLength="28" lengthAdjust="spacingAndGlyphs" fill="#3a3a3a" stroke="#fff" stroke-width="2" stroke-opacity=".7" paint-order="stroke">Ankara</text>
<text x="1605" y="621.2" font-size="9" textLength="28" lengthAdjust="spacingAndGlyphs" fill="#3a3a3a" stroke="#fff" stroke-width="2" stroke-opacity=".7" paint-order="stroke">Çorum</text>
<text x="1500" y="627.2" font-size="9" textLength="24" lengthAdjust="spacingAndGlyphs" fill="#3a3a3a" stroke="#fff" stroke-width="2" stroke-opacity=".7" paint-order="stroke">Bursa</text>
<text x="1472" y="640.2" font-size="9" textLength="36" lengthAdjust="spacingAndGlyphs" fill="#3a3a3a" stroke="#fff" stroke-width="2" stroke-opacity=".7" paint-order="stroke">Balıkesir</text>
<text x="1532" y="639.2" font-size="9" textLength="33" lengthAdjust="spacingAndGlyphs" fill="#3a3a3a" stroke="#fff" stroke-width="2" stroke-opacity=".7" paint-order="stroke">Kütahya</text>
<text x="1610" y="648.2" font-size="10" textLength="36" lengthAdjust="spacingAndGlyphs" fill="#9a6a9a" stroke="#fff" stroke-width="2" stroke-opacity=".7" paint-order="stroke">Türkiye</text>
<text x="1368" y="652.2" font-size="10" textLength="27" lengthAdjust="spacingAndGlyphs" fill="#9a6a9a" stroke="#fff" stroke-width="2" stroke-opacity=".7" paint-order="stroke">Ελλάς</text>
<text x="1465" y="656.2" font-size="9" textLength="21" lengthAdjust="spacingAndGlyphs" fill="#3a3a3a" stroke="#fff" stroke-width="2" stroke-opacity=".7" paint-order="stroke">İzmir</text>
<text x="1540" y="655.2" font-size="9" textLength="63" lengthAdjust="spacingAndGlyphs" fill="#3a3a3a" stroke="#fff" stroke-width="2" stroke-opacity=".7" paint-order="stroke">Afyonkarahisar</text>
<text x="1197" y="663.2" font-size="9" textLength="45" lengthAdjust="spacingAndGlyphs" fill="#3a3a3a" stroke="#fff" stroke-width="2" stroke-opacity=".7" paint-order="stroke">Palermo</text>
<text x="1365" y="674.2" font-size="9" textLength="26" lengthAdjust="spacingAndGlyphs" fill="#3a3a3a" stroke="#fff" stroke-width="2" stroke-opacity=".7" paint-order="stroke">Πάτρα</text>
<text x="1561" y="669.2" font-size="9" textLength="27" lengthAdjust="spacingAndGlyphs" fill="#3a3a3a" stroke="#fff" stroke-width="2" stroke-opacity=".7" paint-order="stroke">Konya</text>
<text x="1411" y="683.2" font-size="9" textLength="16" lengthAdjust="spacingAndGlyphs" fill="#3a3a3a" stroke="#fff" stroke-width="2" stroke-opacity=".7" paint-order="stroke">Αθήνα</text>
<text x="1478" y="682.2" font-size="9" textLength="22" lengthAdjust="spacingAndGlyphs" fill="#3a3a3a" stroke="#fff" stroke-width="2" stroke-opacity=".7" paint-order="stroke">Aydın</text>
<text x="1514" y="677.2" font-size="9" textLength="30" lengthAdjust="spacingAndGlyphs" fill="#3a3a3a" stroke="#fff" stroke-width="2" stroke-opacity=".7" paint-order="stroke">Denizli</text>
<text x="1525" y="692.2" font-size="9" textLength="32" lengthAdjust="spacingAndGlyphs" fill="#3a3a3a" stroke="#fff" stroke-width="2" stroke-opacity=".7" paint-order="stroke">Antalya</text>
<text x="1612" y="689.2" font-size="9" textLength="27" lengthAdjust="spacingAndGlyphs" fill="#3a3a3a" stroke="#fff" stroke-width="2" stroke-opacity=".7" paint-order="stroke">Adana</text>
<text x="1077" y="681.2" font-size="9" textLength="51" lengthAdjust="spacingAndGlyphs" fill="#3a3a3a" stroke="#fff" stroke-width="2" stroke-opacity=".7" paint-order="stroke">Constantine</text>
<text x="894" y="581.2" font-size="8" textLength="26" lengthAdjust="spacingAndGlyphs" fill="#9a6a9a" stroke="#fff" stroke-width="2" stroke-opacity=".7" paint-order="stroke" font-style="italic">Castilla y</text>
<text x="898" y="590.2" font-size="8" textLength="18" lengthAdjust="spacingAndGlyphs" fill="#9a6a9a" stroke="#fff" stroke-width="2" stroke-opacity=".7" paint-order="stroke" font-style="italic">León</text>
<text x="954" y="591.2" font-size="8" textLength="26" lengthAdjust="spacingAndGlyphs" fill="#9a6a9a" stroke="#fff" stroke-width="2" stroke-opacity=".7" paint-order="stroke" font-style="italic">Aragón</text>
<text x="993" y="574.2" font-size="9" textLength="34" lengthAdjust="spacingAndGlyphs" fill="#3a3a3a" stroke="#fff" stroke-width="2" stroke-opacity=".7" paint-order="stroke">Andorra</text>
<text x="995" y="584.2" font-size="9" textLength="30" lengthAdjust="spacingAndGlyphs" fill="#3a3a3a" stroke="#fff" stroke-width="2" stroke-opacity=".7" paint-order="stroke">la Vella</text>
<text x="900" y="607.2" font-size="9" textLength="23" lengthAdjust="spacingAndGlyphs" fill="#3a3a3a" stroke="#fff" stroke-width="2" stroke-opacity=".7" paint-order="stroke">Madrid</text>
<text x="905" y="628.2" font-size="10" textLength="34" lengthAdjust="spacingAndGlyphs" fill="#9a6a9a" stroke="#fff" stroke-width="2" stroke-opacity=".7" paint-order="stroke">España</text>
<text x="959" y="631.2" font-size="9" textLength="33" lengthAdjust="spacingAndGlyphs" fill="#3a3a3a" stroke="#fff" stroke-width="2" stroke-opacity=".7" paint-order="stroke">València</text>
<text x="1019" y="629.2" font-size="9" textLength="24" lengthAdjust="spacingAndGlyphs" fill="#3a3a3a" stroke="#fff" stroke-width="2" stroke-opacity=".7" paint-order="stroke">Palma</text>
<text x="805" y="639.2" font-size="10" textLength="40" lengthAdjust="spacingAndGlyphs" fill="#9a6a9a" stroke="#fff" stroke-width="2" stroke-opacity=".7" paint-order="stroke">Portugal</text>
<text x="802" y="664.2" font-size="9" textLength="26" lengthAdjust="spacingAndGlyphs" fill="#3a3a3a" stroke="#fff" stroke-width="2" stroke-opacity=".7" paint-order="stroke">Lisboa</text>
<text x="844" y="687.2" font-size="9" textLength="24" lengthAdjust="spacingAndGlyphs" fill="#3a3a3a" stroke="#fff" stroke-width="2" stroke-opacity=".7" paint-order="stroke">Sevilla</text>
<text x="882" y="687.2" font-size="8" textLength="35" lengthAdjust="spacingAndGlyphs" fill="#9a6a9a" stroke="#fff" stroke-width="2" stroke-opacity=".7" paint-order="stroke" font-style="italic">Andalucía</text>
<text x="905" y="702.2" font-size="9" textLength="30" lengthAdjust="spacingAndGlyphs" fill="#3a3a3a" stroke="#fff" stroke-width="2" stroke-opacity=".7" paint-order="stroke">Málaga</text>
<text x="942" y="708.2" font-size="9" textLength="20" lengthAdjust="spacingAndGlyphs" fill="#3a3a3a" stroke="#fff" stroke-width="2" stroke-opacity=".7" paint-order="stroke">Oran</text>
<text x="803" y="268.2" font-size="9" textLength="62" lengthAdjust="spacingAndGlyphs" fill="#3a3a3a" stroke="#fff" stroke-width="2" stroke-opacity=".7" paint-order="stroke">Éire / Ireland</text>
<text x="890" y="266.2" font-size="9" textLength="48" lengthAdjust="spacingAndGlyphs" fill="#3a3a3a" stroke="#fff" stroke-width="2" stroke-opacity=".7" paint-order="stroke">Manchester</text>
<text x="959" y="269.2" font-size="9" textLength="36" lengthAdjust="spacingAndGlyphs" fill="#3a3a3a" stroke="#fff" stroke-width="2" stroke-opacity=".7" paint-order="stroke">Sheffield</text>
<text x="959" y="283.2" font-size="8" textLength="29" lengthAdjust="spacingAndGlyphs" fill="#9a6a9a" stroke="#fff" stroke-width="2" stroke-opacity=".7" paint-order="stroke" font-style="italic">England</text>
<text x="899" y="292.2" font-size="8" textLength="28" lengthAdjust="spacingAndGlyphs" fill="#9a6a9a" stroke="#fff" stroke-width="2" stroke-opacity=".7" paint-order="stroke" font-style="italic">Cymru /</text>
<text x="903" y="301.2" font-size="8" textLength="20" lengthAdjust="spacingAndGlyphs" fill="#9a6a9a" stroke="#fff" stroke-width="2" stroke-opacity=".7" paint-order="stroke" font-style="italic">Wales</text>
<text x="951" y="296.2" font-size="9" textLength="51" lengthAdjust="spacingAndGlyphs" fill="#3a3a3a" stroke="#fff" stroke-width="2" stroke-opacity=".7" paint-order="stroke">Birmingham</text>
<text x="910" y="319.2" font-size="9" textLength="28" lengthAdjust="spacingAndGlyphs" fill="#3a3a3a" stroke="#fff" stroke-width="2" stroke-opacity=".7" paint-order="stroke">Cardiff</text>
<text x="964" y="317.2" font-size="9" textLength="31" lengthAdjust="spacingAndGlyphs" fill="#3a3a3a" stroke="#fff" stroke-width="2" stroke-opacity=".7" paint-order="stroke">London</text>
<text x="1018" y="350.2" font-size="9" textLength="17" lengthAdjust="spacingAndGlyphs" fill="#3a3a3a" stroke="#fff" stroke-width="2" stroke-opacity=".7" paint-order="stroke">Lille</text>
<text x="913" y="380.2" font-size="9" textLength="46" lengthAdjust="spacingAndGlyphs" fill="#3a3a3a" stroke="#fff" stroke-width="2" stroke-opacity=".7" paint-order="stroke">Guernsey</text>
<text x="1015" y="392.2" font-size="9" textLength="20" lengthAdjust="spacingAndGlyphs" fill="#3a3a3a" stroke="#fff" stroke-width="2" stroke-opacity=".7" paint-order="stroke">Paris</text>
<text x="937" y="414.2" font-size="9" textLength="30" lengthAdjust="spacingAndGlyphs" fill="#3a3a3a" stroke="#fff" stroke-width="2" stroke-opacity=".7" paint-order="stroke">Rennes</text>
<text x="940" y="438.2" font-size="9" textLength="29" lengthAdjust="spacingAndGlyphs" fill="#3a3a3a" stroke="#fff" stroke-width="2" stroke-opacity=".7" paint-order="stroke">Nantes</text>
<text x="1002" y="455.2" font-size="10" textLength="30" lengthAdjust="spacingAndGlyphs" fill="#9a6a9a" stroke="#fff" stroke-width="2" stroke-opacity=".7" paint-order="stroke">France</text>
<text x="996" y="428.2" font-size="8" textLength="36" lengthAdjust="spacingAndGlyphs" fill="#9a6a9a" stroke="#fff" stroke-width="2" stroke-opacity=".7" paint-order="stroke" font-style="italic">Centre-Val</text>
<text x="1000" y="437.2" font-size="8" textLength="28" lengthAdjust="spacingAndGlyphs" fill="#9a6a9a" stroke="#fff" stroke-width="2" stroke-opacity=".7" paint-order="stroke" font-style="italic">de Loire</text>
<text x="972" y="497.2" font-size="8" textLength="35" lengthAdjust="spacingAndGlyphs" fill="#9a6a9a" stroke="#fff" stroke-width="2" stroke-opacity=".7" paint-order="stroke" font-style="italic">Nouvelle-</text>
<text x="972" y="506.2" font-size="8" textLength="35" lengthAdjust="spacingAndGlyphs" fill="#9a6a9a" stroke="#fff" stroke-width="2" stroke-opacity=".7" paint-order="stroke" font-style="italic">Aquitaine</text>
<text x="1003" y="534.2" font-size="8" textLength="37" lengthAdjust="spacingAndGlyphs" fill="#9a6a9a" stroke="#fff" stroke-width="2" stroke-opacity=".7" paint-order="stroke" font-style="italic">Occitanie</text>
<text x="929" y="540.2" font-size="9" textLength="47" lengthAdjust="spacingAndGlyphs" fill="#3a3a3a" stroke="#fff" stroke-width="2" stroke-opacity=".7" paint-order="stroke">Pamplona /</text>
<text x="942" y="551.2" font-size="9" textLength="22" lengthAdjust="spacingAndGlyphs" fill="#3a3a3a" stroke="#fff" stroke-width="2" stroke-opacity=".7" paint-order="stroke">Iruña</text>
<text x="1080" y="267.2" font-size="9" textLength="42" lengthAdjust="spacingAndGlyphs" fill="#3a3a3a" stroke="#fff" stroke-width="2" stroke-opacity=".7" paint-order="stroke">Groningen</text>
<text x="1289" y="270.2" font-size="9" textLength="42" lengthAdjust="spacingAndGlyphs" fill="#3a3a3a" stroke="#fff" stroke-width="2" stroke-opacity=".7" paint-order="stroke">Bydgoszcz</text>
<text x="1119" y="290.2" font-size="8" textLength="51" lengthAdjust="spacingAndGlyphs" fill="#9a6a9a" stroke="#fff" stroke-width="2" stroke-opacity=".7" paint-order="stroke" font-style="italic">Niedersachsen</text>
<text x="1214" y="287.2" font-size="9" textLength="23" lengthAdjust="spacingAndGlyphs" fill="#3a3a3a" stroke="#fff" stroke-width="2" stroke-opacity=".7" paint-order="stroke">Berlin</text>
<text x="1276" y="291.2" font-size="9" textLength="29" lengthAdjust="spacingAndGlyphs" fill="#3a3a3a" stroke="#fff" stroke-width="2" stroke-opacity=".7" paint-order="stroke">Poznań</text>
<text x="1344" y="295.2" font-size="9" textLength="40" lengthAdjust="spacingAndGlyphs" fill="#3a3a3a" stroke="#fff" stroke-width="2" stroke-opacity=".7" paint-order="stroke">Warszawa</text>
<text x="1057" y="303.2" font-size="10" textLength="50" lengthAdjust="spacingAndGlyphs" fill="#9a6a9a" stroke="#fff" stroke-width="2" stroke-opacity=".7" paint-order="stroke">Nederland</text>
<text x="1169" y="313.2" font-size="9" textLength="48" lengthAdjust="spacingAndGlyphs" fill="#3a3a3a" stroke="#fff" stroke-width="2" stroke-opacity=".7" paint-order="stroke">Magdeburg</text>
<text x="1316" y="309.2" font-size="10" textLength="31" lengthAdjust="spacingAndGlyphs" fill="#9a6a9a" stroke="#fff" stroke-width="2" stroke-opacity=".7" paint-order="stroke">Polska</text>
<text x="1082" y="326.2" font-size="9" textLength="45" lengthAdjust="spacingAndGlyphs" fill="#3a3a3a" stroke="#fff" stroke-width="2" stroke-opacity=".7" paint-order="stroke">Düsseldorf</text>
<text x="1144" y="334.2" font-size="10" textLength="61" lengthAdjust="spacingAndGlyphs" fill="#9a6a9a" stroke="#fff" stroke-width="2" stroke-opacity=".7" paint-order="stroke">Deutschland</text>
<text x="1215" y="345.2" font-size="9" textLength="33" lengthAdjust="spacingAndGlyphs" fill="#3a3a3a" stroke="#fff" stroke-width="2" stroke-opacity=".7" paint-order="stroke">Dresden</text>
<text x="1276" y="342.2" font-size="9" textLength="33" lengthAdjust="spacingAndGlyphs" fill="#3a3a3a" stroke="#fff" stroke-width="2" stroke-opacity=".7" paint-order="stroke">Wrocław</text>
<text x="1046" y="341.2" font-size="10" textLength="34" lengthAdjust="spacingAndGlyphs" fill="#9a6a9a" stroke="#fff" stroke-width="2" stroke-opacity=".7" paint-order="stroke">België</text>
<text x="1046" y="353.2" font-size="10" textLength="42" lengthAdjust="spacingAndGlyphs" fill="#9a6a9a" stroke="#fff" stroke-width="2" stroke-opacity=".7" paint-order="stroke">Belgique /</text>
<text x="1050" y="365.2" font-size="10" textLength="35" lengthAdjust="spacingAndGlyphs" fill="#9a6a9a" stroke="#fff" stroke-width="2" stroke-opacity=".7" paint-order="stroke">Belgien</text>
<text x="1121" y="347.2" font-size="9" textLength="38" lengthAdjust="spacingAndGlyphs" fill="#3a3a3a" stroke="#fff" stroke-width="2" stroke-opacity=".7" paint-order="stroke">Frankfurt</text>
<text x="1123" y="359.2" font-size="9" textLength="34" lengthAdjust="spacingAndGlyphs" fill="#3a3a3a" stroke="#fff" stroke-width="2" stroke-opacity=".7" paint-order="stroke">am Main</text>
<text x="1329" y="359.2" font-size="9" textLength="31" lengthAdjust="spacingAndGlyphs" fill="#3a3a3a" stroke="#fff" stroke-width="2" stroke-opacity=".7" paint-order="stroke">Kraków</text>
<text x="1164" y="377.2" font-size="9" textLength="40" lengthAdjust="spacingAndGlyphs" fill="#3a3a3a" stroke="#fff" stroke-width="2" stroke-opacity=".7" paint-order="stroke">Nürnberg</text>
<text x="1251" y="375.2" font-size="10" textLength="27" lengthAdjust="spacingAndGlyphs" fill="#9a6a9a" stroke="#fff" stroke-width="2" stroke-opacity=".7" paint-order="stroke">Česko</text>
<text x="1067" y="387.2" font-size="9" textLength="52" lengthAdjust="spacingAndGlyphs" fill="#3a3a3a" stroke="#fff" stroke-width="2" stroke-opacity=".7" paint-order="stroke">Luxembourg</text>
<text x="1130" y="409.2" font-size="9" textLength="37" lengthAdjust="spacingAndGlyphs" fill="#3a3a3a" stroke="#fff" stroke-width="2" stroke-opacity=".7" paint-order="stroke">Stuttgart</text>
<text x="1234" y="409.2" font-size="9" textLength="15" lengthAdjust="spacingAndGlyphs" fill="#3a3a3a" stroke="#fff" stroke-width="2" stroke-opacity=".7" paint-order="stroke">Linz</text>
<text x="1274" y="397.2" font-size="9" textLength="20" lengthAdjust="spacingAndGlyphs" fill="#3a3a3a" stroke="#fff" stroke-width="2" stroke-opacity=".7" paint-order="stroke">Brno</text>
<text x="1270" y="410.2" font-size="9" textLength="19" lengthAdjust="spacingAndGlyphs" fill="#3a3a3a" stroke="#fff" stroke-width="2" stroke-opacity=".7" paint-order="stroke">Wien</text>
<text x="1316" y="405.2" font-size="10" textLength="48" lengthAdjust="spacingAndGlyphs" fill="#9a6a9a" stroke="#fff" stroke-width="2" stroke-opacity=".7" paint-order="stroke">Slovensko</text>
<text x="1173" y="426.2" font-size="9" textLength="39" lengthAdjust="spacingAndGlyphs" fill="#3a3a3a" stroke="#fff" stroke-width="2" stroke-opacity=".7" paint-order="stroke">München</text>
<text x="1225" y="433.2" font-size="10" textLength="51" lengthAdjust="spacingAndGlyphs" fill="#9a6a9a" stroke="#fff" stroke-width="2" stroke-opacity=".7" paint-order="stroke">Österreich</text>
<text x="1296" y="447.2" font-size="10" textLength="68" lengthAdjust="spacingAndGlyphs" fill="#9a6a9a" stroke="#fff" stroke-width="2" stroke-opacity=".7" paint-order="stroke">Magyarország</text>
<text x="1114" y="443.2" font-size="10" textLength="42" lengthAdjust="spacingAndGlyphs" fill="#9a6a9a" stroke="#fff" stroke-width="2" stroke-opacity=".7" paint-order="stroke">Schweiz/</text>
<text x="1097" y="455.2" font-size="10" textLength="76" lengthAdjust="spacingAndGlyphs" fill="#9a6a9a" stroke="#fff" stroke-width="2" stroke-opacity=".7" paint-order="stroke">Suisse/Svizzera/</text>
<text x="1253" y="455.2" font-size="9" textLength="20" lengthAdjust="spacingAndGlyphs" fill="#3a3a3a" stroke="#fff" stroke-width="2" stroke-opacity=".7" paint-order="stroke">Graz</text>
<text x="1226" y="474.2" font-size="10" textLength="43" lengthAdjust="spacingAndGlyphs" fill="#9a6a9a" stroke="#fff" stroke-width="2" stroke-opacity=".7" paint-order="stroke">Slovenija</text>
<text x="1325" y="483.2" font-size="9" textLength="40" lengthAdjust="spacingAndGlyphs" fill="#3a3a3a" stroke="#fff" stroke-width="2" stroke-opacity=".7" paint-order="stroke">Timișoara</text>
<text x="1135" y="484.2" font-size="9" textLength="28" lengthAdjust="spacingAndGlyphs" fill="#3a3a3a" stroke="#fff" stroke-width="2" stroke-opacity=".7" paint-order="stroke">Milano</text>
<text x="1049" y="485.2" font-size="8" textLength="42" lengthAdjust="spacingAndGlyphs" fill="#9a6a9a" stroke="#fff" stroke-width="2" stroke-opacity=".7" paint-order="stroke" font-style="italic">Auvergne-</text>
<text x="1049" y="494.2" font-size="8" textLength="42" lengthAdjust="spacingAndGlyphs" fill="#9a6a9a" stroke="#fff" stroke-width="2" stroke-opacity=".7" paint-order="stroke" font-style="italic">Rhône-Alpes</text>
<text x="1337" y="499.2" font-size="9" textLength="35" lengthAdjust="spacingAndGlyphs" fill="#3a3a3a" stroke="#fff" stroke-width="2" stroke-opacity=".7" paint-order="stroke">Beograd</text>
<text x="1109" y="507.2" font-size="9" textLength="26" lengthAdjust="spacingAndGlyphs" fill="#3a3a3a" stroke="#fff" stroke-width="2" stroke-opacity=".7" paint-order="stroke">Torino</text>
<text x="1148" y="518.2" font-size="9" textLength="30" lengthAdjust="spacingAndGlyphs" fill="#3a3a3a" stroke="#fff" stroke-width="2" stroke-opacity=".7" paint-order="stroke">Genova</text>
<text x="1192" y="516.2" font-size="9" textLength="33" lengthAdjust="spacingAndGlyphs" fill="#3a3a3a" stroke="#fff" stroke-width="2" stroke-opacity=".7" paint-order="stroke">Bologna</text>
<text x="1236" y="519.2" font-size="10" textLength="42" lengthAdjust="spacingAndGlyphs" fill="#9a6a9a" stroke="#fff" stroke-width="2" stroke-opacity=".7" paint-order="stroke">Hrvatska</text>
<text x="1299" y="524.2" font-size="9" textLength="35" lengthAdjust="spacingAndGlyphs" fill="#3a3a3a" stroke="#fff" stroke-width="2" stroke-opacity=".7" paint-order="stroke">Sarajevo</text>
<text x="1348" y="524.2" font-size="10" textLength="33" lengthAdjust="spacingAndGlyphs" fill="#9a6a9a" stroke="#fff" stroke-width="2" stroke-opacity=".7" paint-order="stroke">Србија</text>
<text x="1184" y="538.2" font-size="9" textLength="48" lengthAdjust="spacingAndGlyphs" fill="#3a3a3a" stroke="#fff" stroke-width="2" stroke-opacity=".7" paint-order="stroke">Città di San</text>
<text x="1196" y="548.2" font-size="9" textLength="26" lengthAdjust="spacingAndGlyphs" fill="#3a3a3a" stroke="#fff" stroke-width="2" stroke-opacity=".7" paint-order="stroke">Marino</text>
<text x="1302" y="556.2" font-size="10" textLength="55" lengthAdjust="spacingAndGlyphs" fill="#9a6a9a" stroke="#fff" stroke-width="2" stroke-opacity=".7" paint-order="stroke">Crna Gora /</text>
<text x="1305" y="568.2" font-size="10" textLength="49" lengthAdjust="spacingAndGlyphs" fill="#9a6a9a" stroke="#fff" stroke-width="2" stroke-opacity=".7" paint-order="stroke">Црна Гора</text>
<text x="1060" y="552.2" font-size="9" textLength="37" lengthAdjust="spacingAndGlyphs" fill="#3a3a3a" stroke="#fff" stroke-width="2" stroke-opacity=".7" paint-order="stroke">Marseille</text>
</svg><!-- zoom -->
<div class="a" style="left:381px;top:165px;width:17px;height:17px;background:#606060;border-radius:2px 2px 0 0;color:#fff;font:bold 14px/17px 'Liberation Sans',sans-serif;text-align:center">+</div>
<div class="a" style="left:381px;top:183px;width:17px;height:18px;background:#606060;border-radius:0 0 2px 2px"></div>
<div class="a" style="left:385.5px;top:191px;width:8px;height:2px;background:#f4f4f4"></div>
<!-- overlay panel -->
<div class="a" style="left:702px;top:254px;width:682px;height:314px;background:rgba(99,99,99,.79)"></div>
<div class="a ib" style="left:714px;top:261px"></div>
<div class="a ib" style="left:714px;top:325px"></div>
<div class="a ib" style="left:714px;top:389px"></div>
<div class="a ib" style="left:714px;top:453px"></div>
<div class="a ib" style="left:714px;top:517px"></div>
<div class="a ib" style="left:1055px;top:261px"></div>
<div class="a ib" style="left:1055px;top:325px"></div>
<div class="a ib" style="left:1055px;top:389px"></div>
<div class="a ib" style="left:1055px;top:453px"></div>
<div class="a ib" style="left:1055px;top:517px"></div>
<div class="a ot" style="left:766px;top:263px">Recherche</div>
<div class="a ot" style="left:766px;top:327px">Sélection</div>
<div class="a ot" style="left:766px;top:391px">Comparaison de cartes</div>
<div class="a ot" style="left:766px;top:455px">Requêteur</div>
<div class="a ot" style="left:766px;top:519px">Fiche d'urbanisme</div>
<div class="a ot" style="left:1107px;top:263px">Rafraîchir les couches de la carte</div>
<div class="a ot" style="left:1107px;top:327px">Impression</div>
<div class="a ot" style="left:1107px;top:391px">Filtrer une couche</div>
<div class="a ot" style="left:1107px;top:455px">Relevé de propriété</div>
<div class="a ot" style="left:1107px;top:519px">Fiche descriptive</div>
<!-- icons -->
<svg class="a" style="left:724px;top:271px" width="20" height="20" viewBox="0 0 20 20"><circle cx="7.5" cy="7.5" r="5.5" fill="none" stroke="#fff" stroke-width="2.2"/><path d="M11.5 11.5L17.5 17.5" stroke="#fff" stroke-width="2.6"/></svg>
<svg class="a" style="left:724px;top:335px" width="20" height="20" viewBox="0 0 20 20"><circle cx="10" cy="10" r="8.5" fill="#fff"/><circle cx="10" cy="5.8" r="1.5" fill="#3c4244"/><path d="M8 8.5h3v6h1.3v1.5H7.7v-1.5H9v-4.5H8z" fill="#3c4244"/></svg>
<svg class="a" style="left:724px;top:398px" width="20" height="20" viewBox="0 0 20 20"><path d="M2 5.5L10 1.5l8 4V18l-8-3-8 3z" fill="none" stroke="#fff" stroke-width="1.5"/><path d="M4 10.5h12M4 10.5l2.5-2.5M4 10.5l2.5 2.5M16 10.5l-2.5-2.5M16 10.5l-2.5 2.5M10 1.5v5" fill="none" stroke="#fff" stroke-width="1.5"/></svg>
<svg class="a" style="left:724px;top:463px" width="20" height="16" viewBox="0 0 20 16"><g fill="#484d4f" stroke="#7f8385" stroke-width="1"><rect x="1.5" y="1.5" width="17.5" height="3.3"/><rect x="1.5" y="6.7" width="17.5" height="3.3"/><rect x="1.5" y="11.8" width="17.5" height="3.3"/></g><path d="M3 3.1h10M3 8.3h10M3 13.4h10" stroke="#5c6163" stroke-width="1.6"/><path d="M16.5 2.3v1.8M16.5 7.5v1.8M16.5 12.6v1.8" stroke="#222" stroke-width="1.3"/></svg>
<svg class="a" style="left:724px;top:524.8px" width="20" height="20" viewBox="0 0 20 20"><rect x="1.7" y="1.9" width="13.2" height="16.8" fill="none" stroke="#fff" stroke-width="1.3"/><g fill="#fff"><rect x="3.6" y="4" width="1.3" height="1.3"/><rect x="3.6" y="6.8" width="1.3" height="1.3"/><rect x="3.6" y="9.6" width="1.3" height="1.3"/><rect x="3.6" y="12.4" width="1.3" height="1.3"/><rect x="3.6" y="15.2" width="1.3" height="1.3"/><rect x="6.2" y="4" width="1.3" height="1.3"/><rect x="6.2" y="6.8" width="1.3" height="1.3"/><rect x="6.2" y="9.6" width="1.3" height="1.3"/><rect x="6.2" y="12.4" width="1.3" height="1.3"/><rect x="6.2" y="15.2" width="1.3" height="1.3"/><rect x="12" y="14.2" width="1.3" height="1.3"/></g><rect x="7.3" y="0.8" width="12.2" height="11.7" rx="2.2" fill="#4d5050"/><rect x="7.9" y="1.3" width="11.1" height="10.7" rx="1.8" fill="#fff"/><text x="8.5" y="9.6" font-family="Liberation Sans" font-weight="bold" font-size="7.3" fill="#333">FU</text></svg>
<svg class="a" style="left:1065px;top:270px" width="20" height="20" viewBox="0 0 20 20"><path d="M15.2 5.2A7.6 7.6 0 1 0 15.6 14.2" fill="none" stroke="#fff" stroke-width="2.2"/><path d="M19 0.8V6.7H13z" fill="#fff"/></svg>
<svg class="a" style="left:1065px;top:334px" width="20" height="20" viewBox="0 0 20 20"><path d="M4.5 2h7.5l3.5 3.5V10h-11z" fill="#fff"/><path d="M12 2v3.5h3.5" fill="none" stroke="#4a4c4c" stroke-width=".7"/><rect x="1.2" y="11" width="17.6" height="6.2" rx="1.2" fill="#fff"/><path d="M3.8 14h12.4" stroke="#4a4c4c" stroke-width="1"/></svg>
<svg class="a" style="left:1065px;top:399px" width="20" height="20" viewBox="0 0 20 20"><path d="M2.5 4h15l-5.5 6.5V17l-4-2.5v-4z" fill="#fff"/></svg>
<svg class="a" style="left:1065px;top:460.8px" width="20" height="20" viewBox="0 0 20 20"><rect x="1.7" y="1.9" width="13.2" height="16.8" fill="none" stroke="#fff" stroke-width="1.3"/><g fill="#fff"><rect x="3.6" y="4" width="1.3" height="1.3"/><rect x="3.6" y="6.8" width="1.3" height="1.3"/><rect x="3.6" y="9.6" width="1.3" height="1.3"/><rect x="3.6" y="12.4" width="1.3" height="1.3"/><rect x="3.6" y="15.2" width="1.3" height="1.3"/><rect x="6.2" y="4" width="1.3" height="1.3"/><rect x="6.2" y="6.8" width="1.3" height="1.3"/><rect x="6.2" y="9.6" width="1.3" height="1.3"/><rect x="6.2" y="12.4" width="1.3" height="1.3"/><rect x="6.2" y="15.2" width="1.3" height="1.3"/><rect x="12" y="14.2" width="1.3" height="1.3"/></g><rect x="7.3" y="0.8" width="12.2" height="11.7" rx="2.2" fill="#4d5050"/><rect x="7.9" y="1.3" width="11.1" height="10.7" rx="1.8" fill="#fff"/><text x="8.4" y="9.5" font-family="Liberation Sans" font-size="7" fill="#333">RP</text></svg>
<svg class="a" style="left:1065px;top:524.8px" width="20" height="20" viewBox="0 0 20 20"><rect x="1.7" y="1.9" width="13.2" height="16.8" fill="none" stroke="#fff" stroke-width="1.3"/><g fill="#fff"><rect x="3.6" y="4" width="1.3" height="1.3"/><rect x="3.6" y="6.8" width="1.3" height="1.3"/><rect x="3.6" y="9.6" width="1.3" height="1.3"/><rect x="3.6" y="12.4" width="1.3" height="1.3"/><rect x="3.6" y="15.2" width="1.3" height="1.3"/><rect x="6.2" y="4" width="1.3" height="1.3"/><rect x="6.2" y="6.8" width="1.3" height="1.3"/><rect x="6.2" y="9.6" width="1.3" height="1.3"/><rect x="6.2" y="12.4" width="1.3" height="1.3"/><rect x="6.2" y="15.2" width="1.3" height="1.3"/><rect x="12" y="14.2" width="1.3" height="1.3"/></g><rect x="7.3" y="0.8" width="12.2" height="11.7" rx="2.2" fill="#4d5050"/><rect x="7.9" y="1.3" width="11.1" height="10.7" rx="1.8" fill="#fff"/><text x="12" y="10.5" font-family="Liberation Serif" font-style="italic" font-weight="bold" font-size="10" fill="#333">i</text></svg>
<!-- close -->
<svg class="a" style="left:1367px;top:256px" width="13" height="13" viewBox="0 0 13 13"><path d="M1.5 1.5l10 10M11.5 1.5l-10 10" stroke="#fff" stroke-width="2.6"/></svg>
<!-- top map toolbar -->
<div class="a" style="left:1521px;top:157px;width:40px;height:40px;background:rgba(95,97,92,.6)"></div>
<div class="a" style="left:1565px;top:157px;width:40px;height:40px;background:rgba(95,97,92,.6)"></div>
<div class="a" style="left:1649px;top:158px;width:40px;height:559px;background:rgba(99,99,99,.8)"></div>
<div class="a" style="left:1546px;top:702px;width:143px;height:15px;background:rgba(255,255,255,.75);border-radius:3px 0 0 0"></div>
<div class="a" style="left:1550px;top:703px;font-size:9px;line-height:13px;color:#333">© OpenStreetMap <b>cont</b>ributors.</div>
<div class="a" style="left:1649px;top:702px;width:40px;height:15px;background:rgba(99,99,99,.8)"></div>
<div class="a" style="left:999px;top:674px;width:41px;height:40px;background:rgba(105,108,108,.88)"></div>
<div class="a" style="left:1047px;top:679px;width:40px;height:39px;background:rgba(115,122,125,.6)"></div>
<svg class="a" style="left:0;top:0" width="1869" height="743" viewBox="0 0 1869 743">
<path d="M1565.00 157.00h8.00v4.00h-8.00zM1565.00 193.00h8.00v4.00h-8.00zM1581.00 157.00h8.00v4.00h-8.00zM1581.00 193.00h8.00v4.00h-8.00zM1597.00 157.00h8.00v4.00h-8.00zM1597.00 193.00h8.00v4.00h-8.00zM1565.00 157.00h4.00v7.50h-4.00zM1601.00 157.00h4.00v7.50h-4.00zM1565.00 173.00h4.00v8.00h-4.00zM1601.00 173.00h4.00v8.00h-4.00zM1565.00 189.50h4.00v7.50h-4.00zM1601.00 189.50h4.00v7.50h-4.00z" fill="#111"/>
<path d="M1649.00 158.00h8.00v4.00h-8.00zM1649.00 233.60h8.00v4.00h-8.00zM1665.00 158.00h8.00v4.00h-8.00zM1665.00 233.60h8.00v4.00h-8.00zM1681.00 158.00h8.00v4.00h-8.00zM1681.00 233.60h8.00v4.00h-8.00zM1649.00 158.00h4.00v9.40h-4.00zM1685.00 158.00h4.00v9.40h-4.00zM1649.00 180.00h4.00v11.50h-4.00zM1685.00 180.00h4.00v11.50h-4.00zM1649.00 204.10h4.00v11.50h-4.00zM1685.00 204.10h4.00v11.50h-4.00zM1649.00 228.20h4.00v9.40h-4.00zM1685.00 228.20h4.00v9.40h-4.00z" fill="#111"/>
<path d="M1649.00 598.00h7.50v4.00h-7.50zM1649.00 713.60h7.50v4.00h-7.50zM1665.25 598.00h7.50v4.00h-7.50zM1665.25 713.60h7.50v4.00h-7.50zM1681.50 598.00h7.50v4.00h-7.50zM1681.50 713.60h7.50v4.00h-7.50zM1649.00 598.00h4.00v8.70h-4.00zM1685.00 598.00h4.00v8.70h-4.00zM1649.00 619.70h4.00v9.30h-4.00zM1685.00 619.70h4.00v9.30h-4.00zM1649.00 642.00h4.00v9.30h-4.00zM1685.00 642.00h4.00v9.30h-4.00zM1649.00 664.30h4.00v9.30h-4.00zM1685.00 664.30h4.00v9.30h-4.00zM1649.00 686.60h4.00v9.30h-4.00zM1685.00 686.60h4.00v9.30h-4.00zM1649.00 708.90h4.00v8.70h-4.00zM1685.00 708.90h4.00v8.70h-4.00z" fill="#111"/>
<path d="M995.00 670.00h8.50v4.00h-8.50zM995.00 713.80h8.50v4.00h-8.50zM1015.98 670.00h9.70v4.00h-9.70zM1015.98 713.80h9.70v4.00h-9.70zM1038.15 670.00h9.70v4.00h-9.70zM1038.15 713.80h9.70v4.00h-9.70zM1060.33 670.00h9.70v4.00h-9.70zM1060.33 713.80h9.70v4.00h-9.70zM1082.50 670.00h8.50v4.00h-8.50zM1082.50 713.80h8.50v4.00h-8.50zM995.00 670.00h4.00v8.60h-4.00zM1087.00 670.00h4.00v8.60h-4.00zM995.00 689.40h4.00v9.00h-4.00zM1087.00 689.40h4.00v9.00h-4.00zM995.00 709.20h4.00v8.60h-4.00zM1087.00 709.20h4.00v8.60h-4.00z" fill="#111"/>
<rect x="1532" y="167" width="18.5" height="18" fill="none" stroke="#111" stroke-width="1.8" stroke-dasharray="1.8 2.1"/>
<path d="M1541.5 171.5v9.5M1536.8 176.2h9.5" stroke="#111" stroke-width="1.7"/>
<path d="M1578 167.5h15M1582 167.5v-2.3h7v2.3" fill="none" stroke="#d41616" stroke-width="1.5"/>
<path d="M1579.5 169.5h12l-1 14.5h-10z" fill="none" stroke="#d41616" stroke-width="1.5"/>
<path d="M1583 172v9M1585.5 172v9M1588 172v9" stroke="#d41616" stroke-width="1.2"/>
<path d="M1669.3 174L1661 181.5h2.5V187h4.2v-4h3.2v4h4.2v-5.5h2.5L1675 176.5V174h-2v1z" fill="#fff"/>
<path d="M1663 611h9l3.5 3.5v8.5H1663z" fill="#fff"/><path d="M1672 611v3.5h3.5" fill="none" stroke="#777" stroke-width=".6"/>
<text x="1665" y="619.5" font-family="Liberation Sans" font-size="3.6" fill="#666">OLD</text>
<path d="M1660 624h18v5h-18z" fill="#fff"/><path d="M1662.5 626.3h13" stroke="#777" stroke-width=".8"/>
<path d="M1660.8 656.8h16.4v8h-16.4z" fill="none" stroke="#fff" stroke-width="1.5"/><path d="M1660.5 659.5h17" stroke="#fff" stroke-width="1.2"/><path d="M1663.5 659.5v3.5M1666.5 659.5v3.5M1669.5 659.5v3.5M1672.5 659.5v3.5M1675 659.5v3.5" stroke="#fff" stroke-width="1.3"/>
<path d="M1040 674.5h14v39h-14" fill="none" stroke="#444" stroke-width="2" stroke-dasharray="7 5"/>
<g transform="translate(1011 683)"><path d="M1.2 1.2h12.6v16.6H1.2z" fill="none" stroke="#fff" stroke-width="1.5"/><path d="M3.5 3.5h1.5M6.8 3.5h1.5M10 3.5h1.5M3.5 6.3h1.5M6.8 6.3h1.5M10 6.3h1.5M3.5 9.1h1.5M6.8 9.1h1.5M10 9.1h1.5M3.5 11.9h1.5M6.8 11.9h1.5M10 11.9h1.5" stroke="#fff" stroke-width="1.2"/><path d="M5.8 14h3.4v4H5.8z" fill="#fff"/></g>
<path d="M1060 704.5C1059 703.5 1060 702 1061.5 702.8L1062.5 703.5V700C1062.5 698.5 1064.5 698.2 1065 699.5C1065.3 697.8 1067.5 697.8 1068 699.3C1068.5 698 1070.5 698.2 1070.8 699.8C1071.5 699 1073.5 699.3 1073.5 701V707C1073.5 710 1071.5 711.8 1069 711.8H1065.5C1063.5 711.8 1062 709.5 1060 704.5z" fill="#262626" stroke="#fff" stroke-width="1.2" stroke-linejoin="round"/>
<path d="M1075 707l5.5 5.5-5.5 5.5-5.5-5.5z" fill="#fff"/>
<path d="M1075 708.3v8.4M1070.8 712.5h8.4" stroke="#111" stroke-width="1.1"/><path d="M1073.6 709.7l1.4-1.4 1.4 1.4M1073.6 715.3l1.4 1.4 1.4-1.4M1072 711.1l-1.4 1.4 1.4 1.4M1078 711.1l1.4 1.4-1.4 1.4" fill="none" stroke="#111" stroke-width="1"/>
</svg><!-- red dotted -->
<svg class="a" style="left:700px;top:440px" width="360" height="260" viewBox="700 440 360 260">
<path d="M706.0 447.0h4v4h-4zM714.0 447.0h4v4h-4zM722.0 447.0h4v4h-4zM730.0 447.0h4v4h-4zM738.0 447.0h4v4h-4zM746.0 447.0h4v4h-4zM754.0 447.0h4v4h-4zM756.0 449.0h4v4h-4zM756.0 457.3h4v4h-4zM756.0 465.3h4v4h-4zM756.0 473.3h4v4h-4zM756.0 481.4h4v4h-4zM756.0 489.4h4v4h-4zM756.0 496.4h4v4h-4zM706.0 457.3h4v4h-4zM706.0 465.3h4v4h-4zM706.0 473.3h4v4h-4zM706.0 481.4h4v4h-4zM706.0 489.4h4v4h-4zM706.0 496.4h4v4h-4zM711.0 496.4h4v4h-4zM719.0 496.4h4v4h-4zM727.0 496.4h4v4h-4zM735.0 496.4h4v4h-4zM743.0 496.4h4v4h-4zM751.0 496.4h4v4h-4z" fill="#ff2b2b"/>
<path d="M759 500L1040 680" stroke="#ff2b2b" stroke-width="4.3" stroke-dasharray="4.3 3.8" stroke-dashoffset="-1" fill="none"/>
<path d="M1042 673.5L1046.5 685.5 1034 686" stroke="#ff2b2b" stroke-width="3.6" fill="none" stroke-linejoin="miter"/>
</svg>
</body></html>
